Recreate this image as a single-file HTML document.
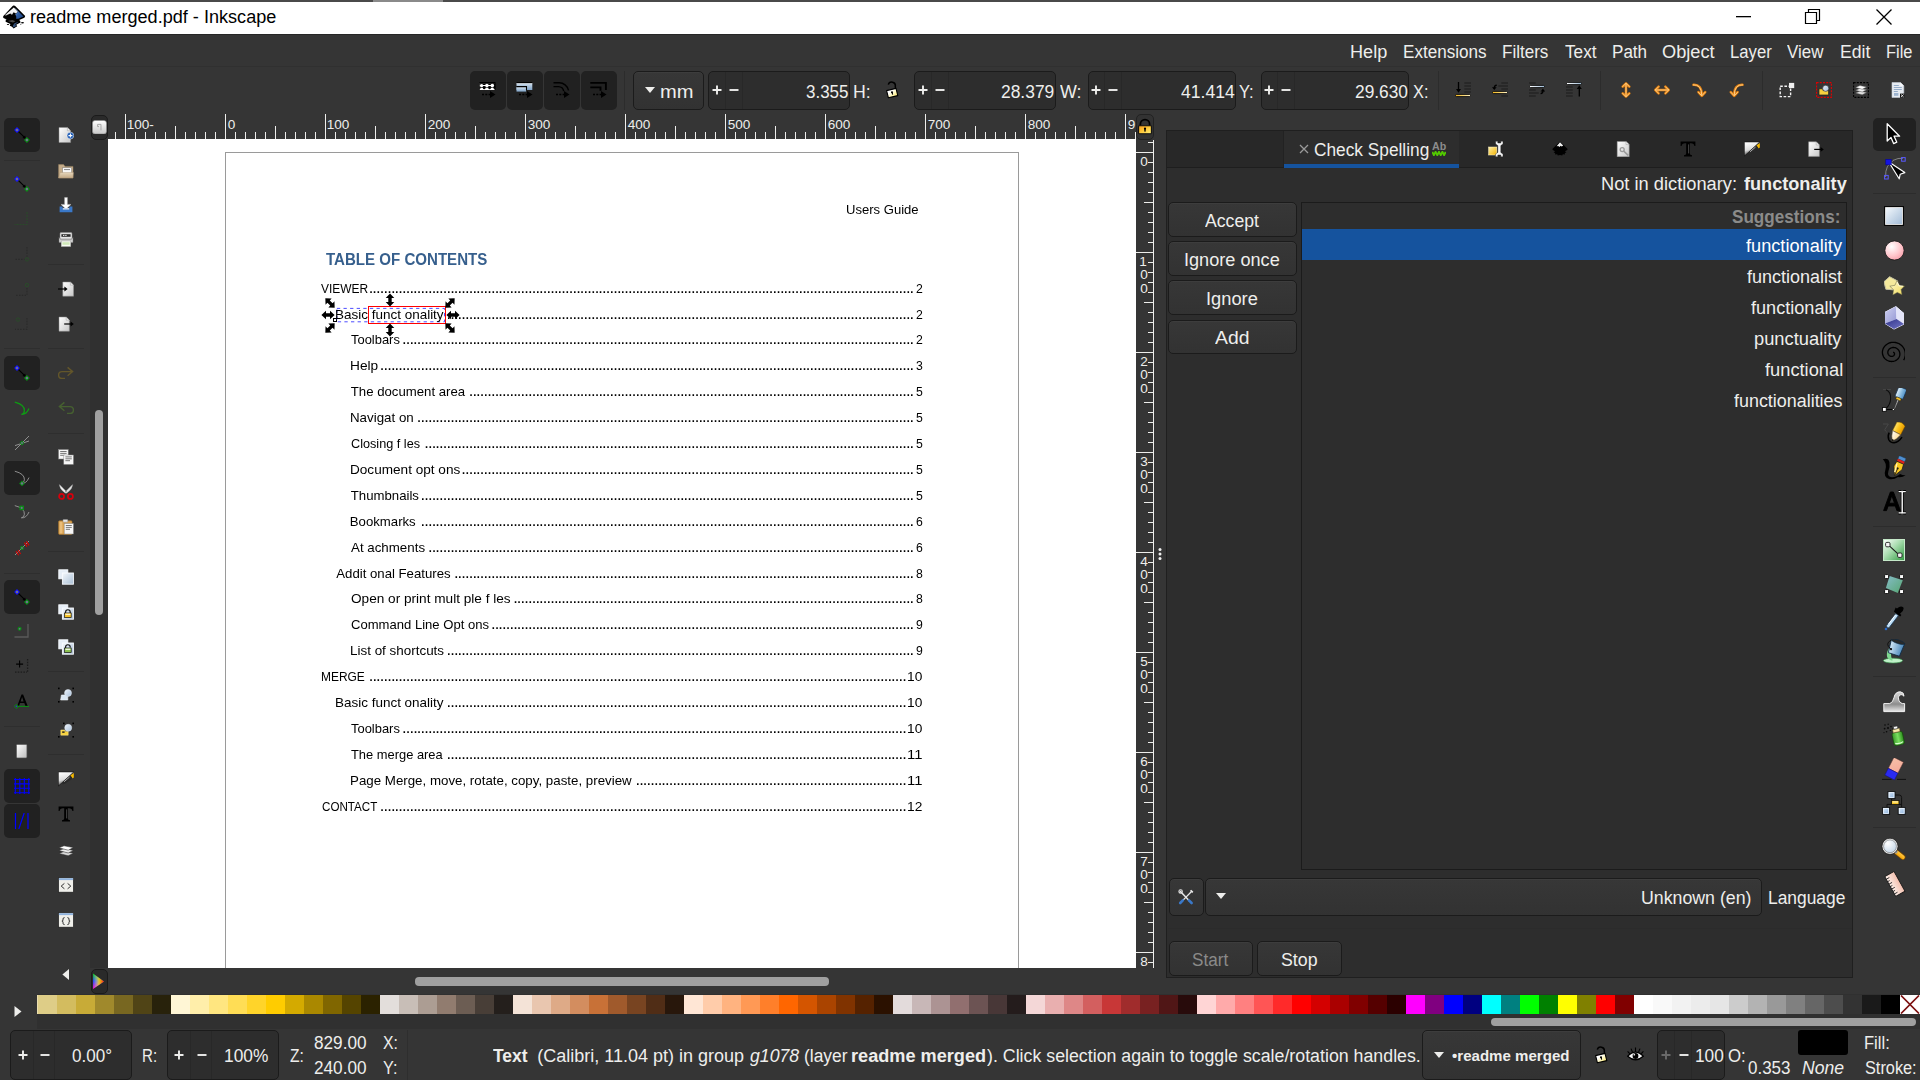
<!DOCTYPE html><html><head><meta charset="utf-8"><title>readme merged.pdf - Inkscape</title><style>

html,body{margin:0;padding:0;background:#353535;}
body{width:1920px;height:1080px;overflow:hidden;position:relative;font-family:"Liberation Sans",sans-serif;color:#eeeeec;}
#app div,#app svg,#app span{position:absolute;box-sizing:border-box;}
#app{position:absolute;left:0;top:0;width:1920px;height:1080px;overflow:hidden;}
#app span{white-space:pre;line-height:0;transform-origin:0 0;}
.btn{background:linear-gradient(#373737,#323232);border:1px solid #1b1b1b;border-radius:5px;box-shadow:inset 0 1px rgba(255,255,255,.03);}
.ent{background:#2d2d2d;border:1px solid #1b1b1b;border-radius:5px;}
.tog{background:#212121;border-radius:5px;}

</style></head><body><div id="app">
<div style="left:0px;top:0px;width:1920px;height:2px;background:#4a4a4a;"></div>
<div style="left:373px;top:0px;width:70px;height:2px;background:#8a8a8a;"></div>
<div style="left:0px;top:2px;width:1920px;height:32px;background:#ffffff;"></div>
<div style="left:0px;top:34px;width:1920px;height:32px;background:#353535;"></div>
<div style="left:0px;top:34px;width:1920px;height:1px;background:#262626;"></div>
<div style="left:0px;top:66px;width:1920px;height:1px;background:#303030;"></div>
<div class="tog" style="left:470px;top:71px;width:36px;height:39px;"></div>
<div class="tog" style="left:507px;top:71px;width:36px;height:39px;"></div>
<div class="tog" style="left:544px;top:71px;width:36px;height:39px;"></div>
<div class="tog" style="left:581px;top:71px;width:36px;height:39px;"></div>
<div style="left:624px;top:71px;width:1px;height:39px;background:#2c2c2c;"></div>
<div class="btn" style="left:632.5px;top:71px;width:71px;height:39px;"></div>
<div class="ent" style="left:708.25px;top:71px;width:141.25px;height:39px;"></div>
<div style="left:724.5px;top:72px;width:1px;height:37px;background:#282828;"></div>
<div style="left:741.5px;top:72px;width:1px;height:37px;background:#282828;"></div>
<div class="ent" style="left:914.25px;top:71px;width:141.5px;height:39px;"></div>
<div style="left:930.5px;top:72px;width:1px;height:37px;background:#282828;"></div>
<div style="left:947.5px;top:72px;width:1px;height:37px;background:#282828;"></div>
<div class="ent" style="left:1087.5px;top:71px;width:148.0px;height:39px;"></div>
<div style="left:1103.5px;top:72px;width:1px;height:37px;background:#282828;"></div>
<div style="left:1120.5px;top:72px;width:1px;height:37px;background:#282828;"></div>
<div class="ent" style="left:1260.5px;top:71px;width:148.25px;height:39px;"></div>
<div style="left:1276.5px;top:72px;width:1px;height:37px;background:#282828;"></div>
<div style="left:1293.5px;top:72px;width:1px;height:37px;background:#282828;"></div>
<div style="left:1437.5px;top:71px;width:1px;height:39px;background:#2c2c2c;"></div>
<div style="left:1599.5px;top:71px;width:1px;height:39px;background:#2c2c2c;"></div>
<div style="left:1762px;top:71px;width:1px;height:39px;background:#2c2c2c;"></div>
<div class="tog" style="left:4px;top:118px;width:36px;height:34px;"></div>
<div class="tog" style="left:4px;top:356px;width:36px;height:34px;"></div>
<div class="tog" style="left:4px;top:461px;width:36px;height:34px;"></div>
<div class="tog" style="left:4px;top:580px;width:36px;height:34px;"></div>
<div class="tog" style="left:4px;top:769px;width:36px;height:34px;"></div>
<div class="tog" style="left:4px;top:804px;width:36px;height:34px;"></div>
<div style="left:4px;top:159.5px;width:36px;height:1px;background:#2e2e2e;"></div>
<div style="left:4px;top:348px;width:36px;height:1px;background:#2e2e2e;"></div>
<div style="left:4px;top:572.5px;width:36px;height:1px;background:#2e2e2e;"></div>
<div style="left:4px;top:726px;width:36px;height:1px;background:#2e2e2e;"></div>
<div style="left:48px;top:264px;width:36px;height:1px;background:#2e2e2e;"></div>
<div style="left:48px;top:348px;width:36px;height:1px;background:#2e2e2e;"></div>
<div style="left:48px;top:432.5px;width:36px;height:1px;background:#2e2e2e;"></div>
<div style="left:48px;top:551px;width:36px;height:1px;background:#2e2e2e;"></div>
<div style="left:48px;top:670.5px;width:36px;height:1px;background:#2e2e2e;"></div>
<div style="left:48px;top:754px;width:36px;height:1px;background:#2e2e2e;"></div>
<div style="left:90px;top:140px;width:18px;height:828px;background:#303030;"></div>
<div style="left:95px;top:410px;width:8px;height:205px;background:#a0a0a0;border-radius:4px;"></div>
<div style="left:108px;top:113px;width:1028px;height:27px;background:#353535;"></div>
<div style="left:108px;top:139px;width:1028px;height:829px;background:#ffffff;"></div>
<div style="left:1136px;top:140px;width:18px;height:828px;background:#353535;"></div>
<div style="left:91px;top:114.5px;width:17px;height:25.5px;background:#2a2a2a;border:1px solid #1b1b1b;border-radius:5px;"></div>
<div style="left:1136px;top:114px;width:18px;height:26px;background:#323232;border:1px solid #222222;border-radius:5px;"></div>
<div style="left:225px;top:152px;width:794px;height:816px;border:1px solid #9a9a9a;border-bottom:none;"></div>
<div style="left:368px;top:306px;width:78px;height:18px;border:1px solid #ff0000;"></div>
<div style="left:333px;top:317.5px;width:4px;height:4px;background:#ffffff;border:1px solid #000000;"></div>
<div style="left:414.5px;top:977px;width:414px;height:8.5px;background:#a0a0a0;border-radius:4px;"></div>
<div style="left:90.5px;top:968.5px;width:17px;height:25px;background:#2a2a2a;border:1px solid #1b1b1b;border-radius:5px;"></div>
<div style="left:1166px;top:130px;width:687px;height:848px;background:#2d2d2d;border:1px solid #1f1f1f;"></div>
<div style="left:1167px;top:131px;width:685px;height:36px;background:#282828;"></div>
<div style="left:1167px;top:167px;width:685px;height:1px;background:#1e1e1e;"></div>
<div style="left:1283px;top:131px;width:1px;height:36px;background:#222222;"></div>
<div style="left:1284px;top:131px;width:175px;height:36px;background:#2d2d2d;"></div>
<div style="left:1284px;top:163.5px;width:175px;height:4px;background:#15539e;"></div>
<div class="btn" style="left:1168px;top:202.0px;width:129px;height:34.5px;"></div>
<div class="btn" style="left:1168px;top:241.2px;width:129px;height:34.5px;"></div>
<div class="btn" style="left:1168px;top:280.4px;width:129px;height:34.5px;"></div>
<div class="btn" style="left:1168px;top:319.6px;width:129px;height:34.5px;"></div>
<div style="left:1301px;top:202px;width:546px;height:668px;background:#2d2d2d;border:1px solid #1b1b1b;"></div>
<div style="left:1302px;top:229px;width:544px;height:31px;background:#15539e;"></div>
<div class="btn" style="left:1168.5px;top:877.5px;width:35px;height:38px;"></div>
<div class="btn" style="left:1205px;top:877.5px;width:556.5px;height:38px;"></div>
<div style="left:1168px;top:928px;width:684px;height:1px;background:#2b2b2b;"></div>
<div class="btn" style="left:1168.5px;top:941px;width:84px;height:34.5px;"></div>
<div class="btn" style="left:1257px;top:941px;width:84.5px;height:34.5px;"></div>
<div class="tog" style="left:1873px;top:118px;width:43px;height:33px;"></div>
<div style="left:1873px;top:192.5px;width:43px;height:1px;background:#2c2c2c;"></div>
<div style="left:1873px;top:376.5px;width:43px;height:1px;background:#2c2c2c;"></div>
<div style="left:1873px;top:526px;width:43px;height:1px;background:#2c2c2c;"></div>
<div style="left:1873px;top:676px;width:43px;height:1px;background:#2c2c2c;"></div>
<div style="left:1873px;top:826.5px;width:43px;height:1px;background:#2c2c2c;"></div>
<div style="left:0px;top:994px;width:1920px;height:35px;background:#303030;"></div>
<div style="left:0px;top:994px;width:37px;height:35px;background:#353535;"></div>
<div style="left:37px;top:995px;width:2px;height:19px;background:#e9ddaf;"></div>
<div style="left:38px;top:995px;width:1862px;height:19px;background:linear-gradient(90deg,#decd87 0px,#decd87 19px,#d3bc5f 19px,#d3bc5f 38px,#c8ab37 38px,#c8ab37 57px,#a0892c 57px,#a0892c 76px,#786721 76px,#786721 95px,#504416 95px,#504416 114px,#28220b 114px,#28220b 133px,#fff6d5 133px,#fff6d5 152px,#ffeeaa 152px,#ffeeaa 171px,#ffe680 171px,#ffe680 190px,#ffdd55 190px,#ffdd55 209px,#ffd42a 209px,#ffd42a 228px,#ffcc00 228px,#ffcc00 247px,#d4aa00 247px,#d4aa00 266px,#aa8800 266px,#aa8800 285px,#806600 285px,#806600 304px,#554400 304px,#554400 323px,#2b2200 323px,#2b2200 342px,#e3dedb 342px,#e3dedb 361px,#c8beb7 361px,#c8beb7 380px,#ac9d93 380px,#ac9d93 399px,#917c6f 399px,#917c6f 418px,#6c5d53 418px,#6c5d53 437px,#483e37 437px,#483e37 456px,#241f1c 456px,#241f1c 475px,#f4e3d7 475px,#f4e3d7 494px,#e9c6af 494px,#e9c6af 513px,#deaa87 513px,#deaa87 532px,#d38d5f 532px,#d38d5f 551px,#c87137 551px,#c87137 570px,#a05a2c 570px,#a05a2c 589px,#784421 589px,#784421 608px,#502d16 608px,#502d16 627px,#28170b 627px,#28170b 646px,#ffe6d5 646px,#ffe6d5 665px,#ffccaa 665px,#ffccaa 684px,#ffb380 684px,#ffb380 703px,#ff9955 703px,#ff9955 722px,#ff7f2a 722px,#ff7f2a 741px,#ff6600 741px,#ff6600 760px,#d45500 760px,#d45500 779px,#aa4400 779px,#aa4400 798px,#803300 798px,#803300 817px,#552200 817px,#552200 836px,#2b1100 836px,#2b1100 855px,#e3dbdb 855px,#e3dbdb 874px,#c8b7b7 874px,#c8b7b7 893px,#ac9393 893px,#ac9393 912px,#916f6f 912px,#916f6f 931px,#6c5353 931px,#6c5353 950px,#483737 950px,#483737 969px,#241c1c 969px,#241c1c 988px,#f4d7d7 988px,#f4d7d7 1007px,#e9afaf 1007px,#e9afaf 1026px,#de8787 1026px,#de8787 1045px,#d35f5f 1045px,#d35f5f 1064px,#c83737 1064px,#c83737 1083px,#a02c2c 1083px,#a02c2c 1102px,#782121 1102px,#782121 1121px,#501616 1121px,#501616 1140px,#280b0b 1140px,#280b0b 1159px,#ffd5d5 1159px,#ffd5d5 1178px,#ffaaaa 1178px,#ffaaaa 1197px,#ff8080 1197px,#ff8080 1216px,#ff5555 1216px,#ff5555 1235px,#ff2a2a 1235px,#ff2a2a 1254px,#ff0000 1254px,#ff0000 1273px,#d40000 1273px,#d40000 1292px,#aa0000 1292px,#aa0000 1311px,#800000 1311px,#800000 1330px,#550000 1330px,#550000 1349px,#2b0000 1349px,#2b0000 1368px,#ff00ff 1368px,#ff00ff 1387px,#800080 1387px,#800080 1406px,#0000ff 1406px,#0000ff 1425px,#000080 1425px,#000080 1444px,#00ffff 1444px,#00ffff 1463px,#008080 1463px,#008080 1482px,#00ff00 1482px,#00ff00 1501px,#008000 1501px,#008000 1520px,#ffff00 1520px,#ffff00 1539px,#808000 1539px,#808000 1558px,#ff0000 1558px,#ff0000 1577px,#800000 1577px,#800000 1596px,#ffffff 1596px,#ffffff 1615px,#f9f9f9 1615px,#f9f9f9 1634px,#f2f2f2 1634px,#f2f2f2 1653px,#ececec 1653px,#ececec 1672px,#e6e6e6 1672px,#e6e6e6 1691px,#cccccc 1691px,#cccccc 1710px,#b3b3b3 1710px,#b3b3b3 1729px,#999999 1729px,#999999 1748px,#808080 1748px,#808080 1767px,#666666 1767px,#666666 1786px,#4d4d4d 1786px,#4d4d4d 1805px,#333333 1805px,#333333 1824px,#1a1a1a 1824px,#1a1a1a 1843px,#000000 1843px,#000000 1862px);"></div>
<div style="left:1491px;top:1017.5px;width:425px;height:8.5px;background:#a0a0a0;border-radius:4px;"></div>
<div style="left:0px;top:1029px;width:1920px;height:51px;background:#353535;"></div>
<div class="ent" style="left:10px;top:1030px;width:122px;height:50px;"></div>
<div style="left:33.4px;top:1031px;width:1px;height:48px;background:#282828;"></div>
<div style="left:54.2px;top:1031px;width:1px;height:48px;background:#282828;"></div>
<div class="ent" style="left:167px;top:1030px;width:112px;height:50px;"></div>
<div style="left:190px;top:1031px;width:1px;height:48px;background:#282828;"></div>
<div style="left:211px;top:1031px;width:1px;height:48px;background:#282828;"></div>
<div style="left:407px;top:1030px;width:1px;height:50px;background:#2e2e2e;"></div>
<div class="btn" style="left:1421.5px;top:1030px;width:159.5px;height:50px;"></div>
<div class="ent" style="left:1657px;top:1030px;width:68px;height:50px;"></div>
<div style="left:1674px;top:1031px;width:1px;height:48px;background:#282828;"></div>
<div style="left:1691.3px;top:1031px;width:1px;height:48px;background:#282828;"></div>
<div style="left:1798.4px;top:1030.3px;width:49.6px;height:24.4px;background:#000000;border-radius:3px;"></div>
<svg style="left:1736.0px;top:15.0px" width="17" height="3" viewBox="0 0 17 3"><rect x="0" y="1" width="15" height="1.3" fill="#000"/></svg>
<svg style="left:1803.5px;top:7.5px" width="18" height="18" viewBox="0 0 18 18"><path d="M1.5 4.5h11v11h-11z M4.5 4.5v-3h11v11h-3" fill="none" stroke="#000" stroke-width="1.2"/></svg>
<svg style="left:1874.5px;top:7.5px" width="18" height="18" viewBox="0 0 18 18"><path d="M1.5 1.5l15 15M16.5 1.5l-15 15" fill="none" stroke="#000" stroke-width="1.3"/></svg>
<svg style="left:645.0px;top:87.0px" width="10" height="6" viewBox="0 0 10 6"><path d="M0 0h10l-5 6z" fill="#eeeeec"/></svg>
<svg style="left:712.175px;top:85.0px" width="10" height="10" viewBox="0 0 10 10"><path d="M5 0.5v9M0.5 5h9" stroke="#eeeeec" stroke-width="1.9" fill="none"/></svg>
<svg style="left:729.3px;top:85.0px" width="10" height="10" viewBox="0 0 10 10"><path d="M0.5 5h9" stroke="#eeeeec" stroke-width="1.9" fill="none"/></svg>
<svg style="left:918.175px;top:85.0px" width="10" height="10" viewBox="0 0 10 10"><path d="M5 0.5v9M0.5 5h9" stroke="#eeeeec" stroke-width="1.9" fill="none"/></svg>
<svg style="left:935.3px;top:85.0px" width="10" height="10" viewBox="0 0 10 10"><path d="M0.5 5h9" stroke="#eeeeec" stroke-width="1.9" fill="none"/></svg>
<svg style="left:1091.3px;top:85.0px" width="10" height="10" viewBox="0 0 10 10"><path d="M5 0.5v9M0.5 5h9" stroke="#eeeeec" stroke-width="1.9" fill="none"/></svg>
<svg style="left:1108.3px;top:85.0px" width="10" height="10" viewBox="0 0 10 10"><path d="M0.5 5h9" stroke="#eeeeec" stroke-width="1.9" fill="none"/></svg>
<svg style="left:1264.3px;top:85.0px" width="10" height="10" viewBox="0 0 10 10"><path d="M5 0.5v9M0.5 5h9" stroke="#eeeeec" stroke-width="1.9" fill="none"/></svg>
<svg style="left:1281.3px;top:85.0px" width="10" height="10" viewBox="0 0 10 10"><path d="M0.5 5h9" stroke="#eeeeec" stroke-width="1.9" fill="none"/></svg>
<svg style="left:108px;top:113px" width="1028" height="27"><path d="M7.5 19V26 M17.5 1V26 M27.5 19V26 M37.5 19V26 M47.5 19V26 M57.5 19V26 M67.5 13V26 M77.5 19V26 M87.5 19V26 M97.5 19V26 M107.5 19V26 M117.5 1V26 M127.5 19V26 M137.5 19V26 M147.5 19V26 M157.5 19V26 M167.5 13V26 M177.5 19V26 M187.5 19V26 M197.5 19V26 M207.5 19V26 M217.5 1V26 M227.5 19V26 M237.5 19V26 M247.5 19V26 M257.5 19V26 M267.5 13V26 M277.5 19V26 M287.5 19V26 M297.5 19V26 M307.5 19V26 M317.5 1V26 M327.5 19V26 M337.5 19V26 M347.5 19V26 M357.5 19V26 M367.5 13V26 M377.5 19V26 M387.5 19V26 M397.5 19V26 M407.5 19V26 M417.5 1V26 M427.5 19V26 M437.5 19V26 M447.5 19V26 M457.5 19V26 M467.5 13V26 M477.5 19V26 M487.5 19V26 M497.5 19V26 M507.5 19V26 M517.5 1V26 M527.5 19V26 M537.5 19V26 M547.5 19V26 M557.5 19V26 M567.5 13V26 M577.5 19V26 M587.5 19V26 M597.5 19V26 M607.5 19V26 M617.5 1V26 M627.5 19V26 M637.5 19V26 M647.5 19V26 M657.5 19V26 M667.5 13V26 M677.5 19V26 M687.5 19V26 M697.5 19V26 M707.5 19V26 M717.5 1V26 M727.5 19V26 M737.5 19V26 M747.5 19V26 M757.5 19V26 M767.5 13V26 M777.5 19V26 M787.5 19V26 M797.5 19V26 M807.5 19V26 M817.5 1V26 M827.5 19V26 M837.5 19V26 M847.5 19V26 M857.5 19V26 M867.5 13V26 M877.5 19V26 M887.5 19V26 M897.5 19V26 M907.5 19V26 M917.5 1V26 M927.5 19V26 M937.5 19V26 M947.5 19V26 M957.5 19V26 M967.5 13V26 M977.5 19V26 M987.5 19V26 M997.5 19V26 M1007.5 19V26 M1017.5 1V26 M1027.5 19V26" stroke="#eeeeec" stroke-width="1" fill="none"/></svg>
<svg style="left:1136px;top:140px" width="18" height="828"><path d="M12 2.5H17 M0 12.5H17 M12 22.5H17 M12 32.5H17 M12 42.5H17 M12 52.5H17 M8 62.5H17 M12 72.5H17 M12 82.5H17 M12 92.5H17 M12 102.5H17 M0 112.5H17 M12 122.5H17 M12 132.5H17 M12 142.5H17 M12 152.5H17 M8 162.5H17 M12 172.5H17 M12 182.5H17 M12 192.5H17 M12 202.5H17 M0 212.5H17 M12 222.5H17 M12 232.5H17 M12 242.5H17 M12 252.5H17 M8 262.5H17 M12 272.5H17 M12 282.5H17 M12 292.5H17 M12 302.5H17 M0 312.5H17 M12 322.5H17 M12 332.5H17 M12 342.5H17 M12 352.5H17 M8 362.5H17 M12 372.5H17 M12 382.5H17 M12 392.5H17 M12 402.5H17 M0 412.5H17 M12 422.5H17 M12 432.5H17 M12 442.5H17 M12 452.5H17 M8 462.5H17 M12 472.5H17 M12 482.5H17 M12 492.5H17 M12 502.5H17 M0 512.5H17 M12 522.5H17 M12 532.5H17 M12 542.5H17 M12 552.5H17 M8 562.5H17 M12 572.5H17 M12 582.5H17 M12 592.5H17 M12 602.5H17 M0 612.5H17 M12 622.5H17 M12 632.5H17 M12 642.5H17 M12 652.5H17 M8 662.5H17 M12 672.5H17 M12 682.5H17 M12 692.5H17 M12 702.5H17 M0 712.5H17 M12 722.5H17 M12 732.5H17 M12 742.5H17 M12 752.5H17 M8 762.5H17 M12 772.5H17 M12 782.5H17 M12 792.5H17 M12 802.5H17 M0 812.5H17 M12 822.5H17 M17.5 0V828" stroke="#eeeeec" stroke-width="1" fill="none"/></svg>
<svg style="left:335px;top:306px" width="112" height="18"><rect x="1.9" y="2.4" width="107.6" height="13.4" fill="none" stroke="#3a3aff" stroke-width="0.9" stroke-dasharray="3.3 3.3"/></svg>
<svg style="left:322.4px;top:294.5px" width="16" height="16" viewBox="-8 -8 16 16"><path d="M-6.6 0l4.6 -4.3v2.6h4v-2.6l4.6 4.3l-4.6 4.3v-2.6h-4v2.6z" fill="#000" transform="rotate(45)"/></svg>
<svg style="left:382.4px;top:292.2px" width="16" height="16" viewBox="-8 -8 16 16"><path d="M-6.6 0l4.6 -4.3v2.6h4v-2.6l4.6 4.3l-4.6 4.3v-2.6h-4v2.6z" fill="#000" transform="rotate(90)"/></svg>
<svg style="left:442.4px;top:294.5px" width="16" height="16" viewBox="-8 -8 16 16"><path d="M-6.6 0l4.6 -4.3v2.6h4v-2.6l4.6 4.3l-4.6 4.3v-2.6h-4v2.6z" fill="#000" transform="rotate(-45)"/></svg>
<svg style="left:320.3px;top:306.6px" width="16" height="16" viewBox="-8 -8 16 16"><path d="M-6.6 0l4.6 -4.3v2.6h4v-2.6l4.6 4.3l-4.6 4.3v-2.6h-4v2.6z" fill="#000" transform="rotate(0)"/></svg>
<svg style="left:444.7px;top:306.6px" width="16" height="16" viewBox="-8 -8 16 16"><path d="M-6.6 0l4.6 -4.3v2.6h4v-2.6l4.6 4.3l-4.6 4.3v-2.6h-4v2.6z" fill="#000" transform="rotate(0)"/></svg>
<svg style="left:322.4px;top:319.5px" width="16" height="16" viewBox="-8 -8 16 16"><path d="M-6.6 0l4.6 -4.3v2.6h4v-2.6l4.6 4.3l-4.6 4.3v-2.6h-4v2.6z" fill="#000" transform="rotate(-45)"/></svg>
<svg style="left:382.4px;top:321.8px" width="16" height="16" viewBox="-8 -8 16 16"><path d="M-6.6 0l4.6 -4.3v2.6h4v-2.6l4.6 4.3l-4.6 4.3v-2.6h-4v2.6z" fill="#000" transform="rotate(90)"/></svg>
<svg style="left:442.4px;top:319.5px" width="16" height="16" viewBox="-8 -8 16 16"><path d="M-6.6 0l4.6 -4.3v2.6h4v-2.6l4.6 4.3l-4.6 4.3v-2.6h-4v2.6z" fill="#000" transform="rotate(45)"/></svg>
<svg style="left:1299.0px;top:143.5px" width="10" height="10" viewBox="0 0 10 10"><path d="M1 1l8 8M9 1l-8 8" stroke="#9a9a9a" stroke-width="1.3" fill="none"/></svg>
<svg style="left:1216.3px;top:893.0px" width="10" height="6" viewBox="0 0 10 6"><path d="M0 0h10l-5 6z" fill="#eeeeec"/></svg>
<svg style="left:1157px;top:546px" width="6" height="16"><circle cx="3" cy="3.500" r="1.500" fill="#f0f0f0"/><circle cx="3" cy="8.100" r="1.500" fill="#f0f0f0"/><circle cx="3" cy="12.600" r="1.500" fill="#f0f0f0"/></svg>
<svg style="left:1900.0px;top:995.0px" width="20" height="19" viewBox="0 0 20 19"><rect width="20" height="19" fill="#fff"/><path d="M1 0.5l18 18M19 0.5l-18 18" stroke="#7c1010" stroke-width="1.700"/></svg>
<svg style="left:14.3px;top:1006.3px" width="8" height="11" viewBox="0 0 8 11"><path d="M0.5 0l7 5.5l-7 5.5z" fill="#eeeeec"/></svg>
<svg style="left:17.5px;top:1049.5px" width="10" height="10" viewBox="0 0 10 10"><path d="M5 0.5v9M0.5 5h9" stroke="#eeeeec" stroke-width="1.9" fill="none"/></svg>
<svg style="left:40.099999999999994px;top:1049.5px" width="10" height="10" viewBox="0 0 10 10"><path d="M0.5 5h9" stroke="#eeeeec" stroke-width="1.9" fill="none"/></svg>
<svg style="left:174.3px;top:1049.5px" width="10" height="10" viewBox="0 0 10 10"><path d="M5 0.5v9M0.5 5h9" stroke="#eeeeec" stroke-width="1.9" fill="none"/></svg>
<svg style="left:196.8px;top:1049.5px" width="10" height="10" viewBox="0 0 10 10"><path d="M0.5 5h9" stroke="#eeeeec" stroke-width="1.9" fill="none"/></svg>
<svg style="left:1433.7px;top:1051.7px" width="10" height="6" viewBox="0 0 10 6"><path d="M0 0h10l-5 6z" fill="#eeeeec"/></svg>
<svg style="left:1661.3px;top:1049.5px" width="10" height="10" viewBox="0 0 10 10"><path d="M5 0.5v9M0.5 5h9" stroke="#6a6a6a" stroke-width="1.9" fill="none"/></svg>
<svg style="left:1678.95px;top:1049.5px" width="10" height="10" viewBox="0 0 10 10"><path d="M0.5 5h9" stroke="#eeeeec" stroke-width="1.9" fill="none"/></svg>
<svg style="left:478.5px;top:82px" width="17" height="16" viewBox="0 0 17 16"><rect x="0.5" y="0" width="16" height="8" fill="#000"/><rect x="0.8" y="1.3" width="14.7" height="6.7" fill="#fff"/><rect x="0.8" y="1.2" width="15.4" height="4.600" fill="#000"/><circle cx="2.600" cy="3.600" r="1.700" fill="#fff"/><circle cx="7.900" cy="3.600" r="1.800" fill="#fff"/><circle cx="13.300" cy="3.600" r="1.800" fill="#fff"/><rect x="2" y="3" width="12" height="1.100" fill="#fff"/><circle cx="5.200" cy="5.900" r="1.300" fill="#000"/><circle cx="10.600" cy="5.900" r="1.300" fill="#000"/><circle cx="15.400" cy="6" r="0.900" fill="#000"/><circle cx="0.900" cy="6" r="0.700" fill="#000"/><path d="M3 12.5h8" stroke="#000" stroke-width="1.3" stroke-dasharray="2 1.3" fill="none"/><path d="M11 9l5.5 3.5l-5.5 3.5z" fill="#000"/></svg>
<svg style="left:515.5px;top:82px" width="17" height="16" viewBox="0 0 17 16"><defs><linearGradient id="g1" x1="0" y1="0" x2="0" y2="1"><stop offset="0" stop-color="#d5e3f0"/><stop offset="1" stop-color="#7ea2c6"/></linearGradient></defs><rect x="0.500" y="0.600" width="15.800" height="7.400" fill="url(#g1)"/><rect x="0.500" y="5" width="9.600" height="4.600" fill="url(#g1)"/><path d="M0.300 4.600h10.200v3.600" stroke="#000" stroke-width="1.100" fill="none"/><rect x="0.300" y="0" width="16.200" height="1.300" fill="#000"/><rect x="0.500" y="1.300" width="15.800" height="0.800" fill="#fff" opacity="0.600"/><path d="M3 12.5h8" stroke="#000" stroke-width="1.3" stroke-dasharray="2 1.3" fill="none"/><path d="M11 9l5.5 3.5l-5.5 3.5z" fill="#000"/></svg>
<svg style="left:552.5px;top:82px" width="17" height="16" viewBox="0 0 17 16"><path d="M0.5 0.8h5.5a9.5 9.5 0 0 1 9.5 7.5M0.5 4.6h5a5.5 5.5 0 0 1 5.2 4.5" stroke="#000" stroke-width="1.4" fill="none"/><path d="M3 12.5h8" stroke="#000" stroke-width="1.3" stroke-dasharray="2 1.3" fill="none"/><path d="M11 9l5.5 3.5l-5.5 3.5z" fill="#000"/></svg>
<svg style="left:589.5px;top:82px" width="17" height="16" viewBox="0 0 17 16"><path d="M0.3 0.9h15.6v7M0.3 5.4h10.2v3.4" stroke="#000" stroke-width="1.9" fill="none"/><path d="M3 12.5h8" stroke="#000" stroke-width="1.3" stroke-dasharray="2 1.3" fill="none"/><path d="M11 9l5.5 3.5l-5.5 3.5z" fill="#000"/></svg>
<svg style="left:884.3px;top:81px" width="16" height="18" viewBox="0 0 16 18"><defs><linearGradient id="g2" x1="0" y1="0" x2="1" y2="1"><stop offset="0" stop-color="#ffffff"/><stop offset="0.35" stop-color="#ffffff"/><stop offset="0.7" stop-color="#fff3a0"/><stop offset="1" stop-color="#ecc830"/></linearGradient></defs><path d="M4.3 3.6a3.6 3.6 0 0 1 7 1.6l0.3 3" stroke="#000" stroke-width="1.5" fill="none"/><path d="M2.6 9.6l9.4 -2.2l1.8 7.2l-9.4 2.2z" fill="url(#g2)" stroke="#000" stroke-width="1.1" stroke-linejoin="round"/><circle cx="8" cy="11.2" r="1.05" fill="#000"/><path d="M7.6 11.5l0.5 2.3l1.1 -0.3l-0.5 -2.2z" fill="#000"/></svg>
<svg style="left:1137px;top:118px" width="16" height="17" viewBox="0 0 16 17"><defs><linearGradient id="g3" x1="0" y1="0" x2="1" y2="1"><stop offset="0" stop-color="#f79a1c"/><stop offset="0.5" stop-color="#ffc93a"/><stop offset="1" stop-color="#fff27a"/></linearGradient></defs><path d="M3.4 8.2v-2a4.6 4.6 0 0 1 9.2 0v2" stroke="#000" stroke-width="1.7" fill="none"/><rect x="1.6" y="7.8" width="12.8" height="8" rx="0.8" fill="url(#g3)" stroke="#111" stroke-width="1.1"/><circle cx="8" cy="10.6" r="1.1" fill="#000"/><rect x="7.3" y="11" width="1.4" height="2.6" fill="#000"/></svg>
<svg style="left:1455px;top:81.5px" width="16" height="16" viewBox="0 0 16 16"><defs><linearGradient id="g4" x1="0" y1="0" x2="1" y2="0"><stop offset="0" stop-color="#f2b619"/><stop offset="1" stop-color="#fff3c8"/></linearGradient></defs><rect x="9.3" y="0.2" width="6.699999999999999" height="1.6" fill="#262626"/><rect x="9.3" y="3.2" width="6.699999999999999" height="1.6" fill="#262626"/><rect x="9.3" y="6.2" width="6.699999999999999" height="1.6" fill="#262626"/><rect x="9.3" y="9.2" width="6.699999999999999" height="1.6" fill="#262626"/><path d="M3.5 0v8" stroke="#000" stroke-width="1.3"/><path d="M1 7h5l-2.5 3.7z" fill="#000"/><rect x="0.5" y="12.4" width="15" height="2.2" rx="1.1" fill="url(#g4)" stroke="#0d0d0d" stroke-width="0.9"/></svg>
<svg style="left:1492px;top:81.5px" width="16" height="16" viewBox="0 0 16 16"><defs><linearGradient id="g4" x1="0" y1="0" x2="1" y2="0"><stop offset="0" stop-color="#f2b619"/><stop offset="1" stop-color="#fff3c8"/></linearGradient></defs><rect x="9.3" y="0.2" width="6.699999999999999" height="1.6" fill="#262626"/><rect x="9.3" y="6.2" width="6.699999999999999" height="1.6" fill="#262626"/><rect x="9.3" y="13.2" width="6.699999999999999" height="1.6" fill="#262626"/><rect x="6.3" y="3.2" width="9.7" height="1.6" fill="#262626"/><path d="M4.8 3.2q-2.6 0.3 -2.6 3" stroke="#000" stroke-width="1.3" fill="none"/><path d="M0 5.2h4.6l-2.3 2.8z" fill="#000"/><rect x="0.5" y="9.4" width="15" height="2.2" rx="1.1" fill="url(#g4)" stroke="#0d0d0d" stroke-width="0.9"/></svg>
<svg style="left:1529px;top:81.5px" width="16" height="16" viewBox="0 0 16 16"><defs><linearGradient id="g5" x1="0" y1="0" x2="1" y2="0"><stop offset="0" stop-color="#ffffff"/><stop offset="1" stop-color="#9fbbd6"/></linearGradient></defs><rect x="0" y="0.2" width="6.8" height="1.6" fill="#262626"/><rect x="0" y="7.2" width="6.8" height="1.6" fill="#262626"/><rect x="0" y="13.2" width="6.8" height="1.6" fill="#262626"/><rect x="0" y="10.2" width="9.8" height="1.6" fill="#262626"/><path d="M11.6 11.6q2.4 -0.3 2.4 -2.6" stroke="#000" stroke-width="1.3" fill="none"/><path d="M11.6 9.4h4.6l-2.3 -2.7z" fill="#000"/><rect x="0.5" y="3.4" width="15" height="2.2" rx="1.1" fill="url(#g5)" stroke="#0d0d0d" stroke-width="0.9"/></svg>
<svg style="left:1566px;top:81.5px" width="16" height="16" viewBox="0 0 16 16"><defs><linearGradient id="g5" x1="0" y1="0" x2="1" y2="0"><stop offset="0" stop-color="#ffffff"/><stop offset="1" stop-color="#9fbbd6"/></linearGradient></defs><rect x="0" y="4.2" width="6.8" height="1.6" fill="#262626"/><rect x="0" y="7.2" width="6.8" height="1.6" fill="#262626"/><rect x="0" y="10.2" width="6.8" height="1.6" fill="#262626"/><rect x="0" y="13.2" width="6.8" height="1.6" fill="#262626"/><path d="M13.3 14.6v-9" stroke="#000" stroke-width="1.3"/><path d="M10.8 7h5l-2.5 -3.7z" fill="#000"/><rect x="0.5" y="0.4" width="15" height="2.2" rx="1.1" fill="url(#g5)" stroke="#0d0d0d" stroke-width="0.9"/></svg>
<svg style="left:1616.6px;top:81px" width="18" height="18" viewBox="0 0 18 18"><path d="M9 2.4v13.2M5.7 5.6l3.3 -3.3l3.3 3.3M5.7 12.4l3.3 3.3l3.3 -3.3" stroke="#e5800e" stroke-width="2.5" fill="none" stroke-linecap="round" stroke-linejoin="round"/><path d="M9 2.4v13.2M5.7 5.6l3.3 -3.3l3.3 3.3M5.7 12.4l3.3 3.3l3.3 -3.3" stroke="#ffd591" stroke-width="0.9" fill="none" stroke-linecap="round" stroke-linejoin="round"/></svg>
<svg style="left:1653.1px;top:80.5px" width="18" height="18" viewBox="0 0 18 18"><path d="M2.3 9h13.4M5.6 5.7l-3.3 3.3l3.3 3.3M12.4 5.7l3.3 3.3l-3.3 3.3" stroke="#e5800e" stroke-width="2.5" fill="none" stroke-linecap="round" stroke-linejoin="round"/><path d="M2.3 9h13.4M5.6 5.7l-3.3 3.3l3.3 3.3M12.4 5.7l3.3 3.3l-3.3 3.3" stroke="#ffd591" stroke-width="0.9" fill="none" stroke-linecap="round" stroke-linejoin="round"/></svg>
<svg style="left:1690.5px;top:81.4px" width="18" height="18" viewBox="0 0 18 18"><path d="M2.4 3.8q8.200 -0.600 8.400 10.200M7.400 11.200l3.400 3.600l3.400 -3.600" stroke="#e5800e" stroke-width="2.5" fill="none" stroke-linecap="round" stroke-linejoin="round"/><path d="M2.4 3.8q8.200 -0.600 8.400 10.200M7.400 11.200l3.400 3.600l3.400 -3.600" stroke="#ffd591" stroke-width="0.9" fill="none" stroke-linecap="round" stroke-linejoin="round"/></svg>
<svg style="left:1727.3px;top:81.4px" width="18" height="18" viewBox="0 0 18 18"><path d="M15.600 3.800q-8.200 -0.600 -8.400 10.200M3.800 11.200l3.400 3.600l3.400 -3.600" stroke="#e5800e" stroke-width="2.5" fill="none" stroke-linecap="round" stroke-linejoin="round"/><path d="M15.600 3.800q-8.200 -0.600 -8.400 10.200M3.800 11.200l3.400 3.600l3.400 -3.600" stroke="#ffd591" stroke-width="0.9" fill="none" stroke-linecap="round" stroke-linejoin="round"/></svg>
<svg style="left:1779px;top:82px" width="16" height="16" viewBox="0 0 16 16"><rect x="1.2" y="4.2" width="10.4" height="10.4" fill="none" stroke="#f4f4f4" stroke-width="1.4" stroke-dasharray="2.6 1.6"/><rect x="10" y="0.9" width="5.2" height="5.2" fill="#f0f0f0"/></svg>
<svg style="left:1816px;top:82px" width="16" height="16" viewBox="0 0 16 16"><defs><linearGradient id="g6" x1="0" y1="0" x2="1" y2="1"><stop offset="0" stop-color="#e7f0fa"/><stop offset="1" stop-color="#a7c0da"/></linearGradient></defs><rect x="0.6" y="0.6" width="14.8" height="14.8" fill="none" stroke="#e00000" stroke-width="1.1" stroke-dasharray="2 1.2"/><path d="M3 6.8h4v1.6h5.6v4.6h-9.6z" fill="#f7d23e" stroke="#1a1a1a" stroke-width="0.7"/><circle cx="9.7" cy="6.3" r="3.1" fill="url(#g6)" stroke="#2a2a2a" stroke-width="0.6"/></svg>
<svg style="left:1853px;top:82px" width="16" height="16" viewBox="0 0 16 16"><rect x="0.6" y="0.6" width="14.8" height="14.8" fill="none" stroke="#000" stroke-width="1.1" stroke-dasharray="2 1.2"/><path d="M2.6 11l4.4 -1.8l6.6 1.4l-4.4 2.2z" fill="#e0e0e0" stroke="#555" stroke-width="0.4"/><path d="M2.6 8.2l4.4 -1.8l6.6 1.4l-4.4 2.2z" fill="#f0f0f0" stroke="#555" stroke-width="0.4"/><path d="M2.6 5.4l4.4 -1.8l6.6 1.4l-4.4 2.2z" fill="#ffffff" stroke="#555" stroke-width="0.4"/></svg>
<svg style="left:1890.2px;top:82px" width="16" height="16" viewBox="0 0 16 16"><path d="M2 0.4h8.4l3.4 3.4v11.8h-11.8z" fill="#e6ebf1" stroke="#c8d0da" stroke-width="0.6"/><path d="M10.4 0.4v3.4h3.4z" fill="#fafcff"/><path d="M3.8 3.5h5M3.8 5.5h8M3.8 7.5h8M3.8 9.5h4" stroke="#8aa5c4" stroke-width="0.9"/><rect x="4" y="11" width="4.4" height="2.8" fill="#9db4cf"/><rect x="10" y="11.6" width="4.6" height="4.2" fill="#111"/><path d="M11 12.5l2.6 2.4M13.6 12.5l-2.6 2.4" stroke="#fff" stroke-width="0.8"/></svg>
<svg style="left:91.8px;top:119.6px" width="15" height="14.4" viewBox="0 0 15 14.4"><defs><linearGradient id="g7" x1="0" y1="0" x2="0" y2="1"><stop offset="0" stop-color="#ffffff"/><stop offset="1" stop-color="#c9c9c9"/></linearGradient></defs><rect x="0.5" y="0.5" width="14" height="13.4" rx="2.5" fill="url(#g7)" stroke="#8a8a8a" stroke-width="0.6"/><path d="M5.6 4.4h3.4v6M5.6 4.400v2.200h1.400" stroke="#a0a0a0" stroke-width="0.900" fill="none"/></svg>
<svg style="left:92.3px;top:972.7px" width="13" height="16" viewBox="0 0 13 16"><defs><linearGradient id="cm1" x1="0" y1="0" x2="0" y2="1"><stop offset="0" stop-color="#00d000"/><stop offset="0.5" stop-color="#2040ff"/><stop offset="1" stop-color="#ff00c0"/></linearGradient><linearGradient id="cm2" x1="0" y1="0" x2="1" y2="0"><stop offset="0" stop-color="#fff" stop-opacity="0"/><stop offset="0.55" stop-color="#ffe000" stop-opacity=".85"/><stop offset="1" stop-color="#ff2000"/></linearGradient></defs><path d="M1 0.5l11 8l-11 7.5z" fill="url(#cm1)"/><path d="M1 0.5l11 8l-11 7.5z" fill="url(#cm2)"/></svg>
<svg style="left:14px;top:127.2px" width="16" height="16" viewBox="0 0 16 16"><path d="M4.6 4.6l5.6 5.6" stroke="#000" stroke-width="1.2"/><path d="M12 12l-3.6 -0.9l2.7 -2.7z" fill="#000"/><path d="M3 0.10000000000000009L5.9 3L3 5.9L0.10000000000000009 3z" fill="#1414ff"/><circle cx="3" cy="3" r="1.22" fill="#6f6f8f"/><path d="M12.9 10.1L15.8 13L12.9 15.9L10.0 13z" fill="#0a8a14"/><circle cx="12.9" cy="13" r="1.22" fill="#6f6f8f"/></svg>
<svg style="left:14px;top:176.2px" width="16" height="16" viewBox="0 0 16 16"><path d="M4.6 4.6l5.6 5.6" stroke="#000" stroke-width="1.2"/><path d="M12 12l-3.6 -0.9l2.7 -2.7z" fill="#000"/><path d="M3 0.10000000000000009L5.9 3L3 5.9L0.10000000000000009 3z" fill="#1414ff"/><circle cx="3" cy="3" r="1.22" fill="#6f6f8f"/><path d="M12.9 10.1L15.8 13L12.9 15.9L10.0 13z" fill="#0a8a14"/><circle cx="12.9" cy="13" r="1.22" fill="#6f6f8f"/></svg>
<svg style="left:14px;top:365.2px" width="16" height="16" viewBox="0 0 16 16"><path d="M4.6 4.6l5.6 5.6" stroke="#000" stroke-width="1.2"/><path d="M12 12l-3.6 -0.9l2.7 -2.7z" fill="#000"/><path d="M3 0.10000000000000009L5.9 3L3 5.9L0.10000000000000009 3z" fill="#1414ff"/><circle cx="3" cy="3" r="1.22" fill="#6f6f8f"/><path d="M12.9 10.1L15.8 13L12.9 15.9L10.0 13z" fill="#0a8a14"/><circle cx="12.9" cy="13" r="1.22" fill="#6f6f8f"/></svg>
<svg style="left:14px;top:589.2px" width="16" height="16" viewBox="0 0 16 16"><path d="M4.6 4.6l5.6 5.6" stroke="#000" stroke-width="1.2"/><path d="M12 12l-3.6 -0.9l2.7 -2.7z" fill="#000"/><path d="M3 0.10000000000000009L5.9 3L3 5.9L0.10000000000000009 3z" fill="#1414ff"/><circle cx="3" cy="3" r="1.22" fill="#6f6f8f"/><path d="M12.9 10.1L15.8 13L12.9 15.9L10.0 13z" fill="#0a8a14"/><circle cx="12.9" cy="13" r="1.22" fill="#6f6f8f"/></svg>
<svg style="left:14px;top:211px" width="16" height="16" viewBox="0 0 16 16"><path d="M13 1v12.5h-12.5" stroke="#2a4a2a" stroke-width="1.1" stroke-dasharray="2 1" fill="none"/></svg>
<svg style="left:14px;top:246px" width="16" height="16" viewBox="0 0 16 16"><path d="M13 1v10M1.5 13.4h9" stroke="#2a2a2a" stroke-width="1.1" stroke-dasharray="1.4 1.4" fill="none"/><circle cx="13" cy="13.4" r="1.7" fill="none" stroke="#2a4a2a" stroke-width="1"/></svg>
<svg style="left:14px;top:282px" width="16" height="16" viewBox="0 0 16 16"><path d="M13 6v7.4h-12" stroke="#2a2a2a" stroke-width="1.1" stroke-dasharray="1.4 1.4" fill="none"/><circle cx="13" cy="3" r="1.7" fill="none" stroke="#2a4a2a" stroke-width="1"/></svg>
<svg style="left:14px;top:316px" width="16" height="16" viewBox="0 0 16 16"><path d="M13 2v11.4h-12" stroke="#2a2a2a" stroke-width="1.1" stroke-dasharray="1.4 1.4" fill="none"/><circle cx="4" cy="3.6" r="1.7" fill="none" stroke="#2a4a2a" stroke-width="1"/></svg>
<svg style="left:14px;top:400.5px" width="16" height="16" viewBox="0 0 16 16"><path d="M0.8 1.2q10 2.6 9.6 8.6q-0.3 3.4 -3 3.6q4.8 0.6 7.6 -5.8" stroke="#0f9a14" stroke-width="1.3" fill="none"/></svg>
<svg style="left:14px;top:435px" width="16" height="16" viewBox="0 0 16 16"><path d="M1 15l14 -14M1 10.6l14 -4.6" stroke="#9a9a9a" stroke-width="0.9" fill="none"/><path d="M8 5.6L10.4 8L8 10.4L5.6 8z" fill="#0a8a14"/><circle cx="8" cy="8" r="1.01" fill="#6f6f8f"/></svg>
<svg style="left:14px;top:469.5px" width="16" height="17" viewBox="0 0 16 17"><path d="M0.8 1.2q10 2.6 9.6 8.6q-0.3 3.4 -3 3.6q4.8 0.6 7.6 -5.8" stroke="#9a9a9a" stroke-width="0.9" fill="none"/><path d="M8 10.5L10.9 13.4L8 16.3L5.1 13.4z" fill="#0a8a14"/><circle cx="8" cy="13.4" r="1.22" fill="#6f6f8f"/></svg>
<svg style="left:14px;top:504px" width="16" height="16" viewBox="0 0 16 16"><path d="M0.8 1.6q10 2.6 9.6 8.6q-0.3 3.4 -3 3.6q4.8 0.6 7.6 -5.8" stroke="#9a9a9a" stroke-width="0.9" fill="none"/><rect x="5.4" y="1.6" width="4.6" height="4.6" fill="#0a8a14"/><circle cx="7.7" cy="3.9" r="1.1" fill="#6f6f8f"/></svg>
<svg style="left:14px;top:539.5px" width="16" height="16" viewBox="0 0 16 16"><path d="M1 15l14 -14" stroke="#9a9a9a" stroke-width="0.9"/><path d="M2 11.2l2.6 4M4 10l2.6 4M10.4 2.6l2.6 4M12.4 1.4l2.6 4" stroke="#e00000" stroke-width="1.1"/><circle cx="8" cy="8" r="2" fill="#0a8a14"/><circle cx="8" cy="8" r="0.9" fill="#6f6f8f"/></svg>
<svg style="left:14px;top:623px" width="16" height="16" viewBox="0 0 16 16"><path d="M14 1v13h-13.5" stroke="#5a5a5a" stroke-width="1.3" fill="none"/><circle cx="5.6" cy="5.8" r="2" fill="#0a8a14"/><circle cx="5.6" cy="5.8" r="0.9" fill="#6f6f8f"/></svg>
<svg style="left:14px;top:657.5px" width="16" height="16" viewBox="0 0 16 16"><path d="M13.6 1v13M1 14.2h12" stroke="#1c1c1c" stroke-width="1.3" stroke-dasharray="1.5 1.3" fill="none"/><path d="M5.6 2.6v7M2.1 6.1h7" stroke="#000" stroke-width="1.1"/></svg>
<svg style="left:14px;top:693px" width="16" height="17" viewBox="0 0 16 17"><path d="M3.2 13l4.3 -11.5h1.6l4.6 11.5h-2.3l-1.1 -3h-4.3l-1 3zM6.6 8.4h3l-1.5 -4.4z" fill="#000"/><path d="M3 13.4h12" stroke="#0a8a14" stroke-width="1.1"/><path d="M2.4 11.2l2.2 2.2l-2.2 2.2l-2.2 -2.2z" fill="none" stroke="#0a8a14" stroke-width="1"/><circle cx="2.4" cy="13.4" r="0.8" fill="#33c"/></svg>
<svg style="left:16.25px;top:744.25px" width="11.5" height="14.5" viewBox="0 0 11.5 14.5"><defs><linearGradient id="g8" x1="0" y1="0" x2="1" y2="1"><stop offset="0" stop-color="#ffffff"/><stop offset="1" stop-color="#bdbdbd"/></linearGradient></defs><rect x="0.5" y="0.5" width="10.4" height="13.4" rx="0.8" fill="url(#g8)" stroke="#555" stroke-width="0.6"/></svg>
<svg style="left:14px;top:778px" width="16" height="16" viewBox="0 0 16 16"><path d="M1.3 0v16M5.800 0v16M10.300 0v16M14.800 0v16M0 1.500h16M0 5.900h16M0 10.300h16M0 14.700h16" stroke="#0000ff" stroke-width="1.100"/></svg>
<svg style="left:14px;top:813px" width="16" height="16" viewBox="0 0 16 16"><path d="M1.5 0v16M14 0v16M10.2 0l-5.4 16" stroke="#0000ff" stroke-width="1.2"/></svg>
<svg style="left:58px;top:127px" width="16" height="16" viewBox="0 0 16 16"><defs><linearGradient id="g9" x1="0" y1="0" x2="1" y2="1"><stop offset="0" stop-color="#ffffff"/><stop offset="1" stop-color="#c8c8c8"/></linearGradient></defs><path d="M1 0.5h8.399999999999999l3.2 3.2v11.8h-11.6z" fill="url(#g9)" stroke="#8c8c8c" stroke-width="0.5"/><path d="M9.399999999999999 0.5v3.2h3.2z" fill="#f2f2f2" stroke="#8c8c8c" stroke-width="0.4"/><circle cx="12.4" cy="8.6" r="3.4" fill="#1d5ab4" stroke="#fff" stroke-width="0.5"/><path d="M12.4 6.6v4M10.4 8.6h4" stroke="#fff" stroke-width="1.1"/></svg>
<svg style="left:58px;top:162.5px" width="16" height="16" viewBox="0 0 16 16"><defs><linearGradient id="g10" x1="0" y1="0" x2="0" y2="1"><stop offset="0" stop-color="#e6d6ba"/><stop offset="1" stop-color="#c3a985"/></linearGradient></defs><path d="M0.6 1.6h5l1.4 1.8h8v11.6h-14.4z" fill="#c6ad8a" stroke="#9c8462" stroke-width="0.5"/><rect x="4.6" y="4.8" width="9" height="5.4" fill="#fbfbfb" stroke="#7a7a7a" stroke-width="0.5"/><path d="M6 6.6h6" stroke="#666" stroke-width="0.8"/><path d="M0.6 15l1.6 -5.6h13.2l-0.4 5.6z" fill="url(#g10)" stroke="#a89070" stroke-width="0.4"/></svg>
<svg style="left:58px;top:197px" width="16" height="16" viewBox="0 0 16 16"><path d="M6.6 0.4h2.8v7h3.6l-5 4.8l-5 -4.8h3.6z" fill="#ffffff" stroke="#bbb" stroke-width="0.4"/><path d="M1.6 9.6h3l0 1.6h6.8v-1.6h3v5.6h-12.8z" fill="#3a78c8"/><rect x="4.8" y="11.2" width="6.4" height="1.3" fill="#e8eef6"/></svg>
<svg style="left:58px;top:232px" width="16" height="15" viewBox="0 0 16 15"><rect x="2" y="0.6" width="12" height="6.6" rx="1" fill="#e4e4e4" stroke="#8a8a8a" stroke-width="0.5"/><rect x="3.4" y="2.2" width="9.2" height="2.6" fill="#2a2a2a"/><rect x="5" y="2.9" width="1.4" height="1.1" fill="#ddd"/><rect x="7.2" y="2.9" width="1.4" height="1.1" fill="#ddd"/><path d="M1 5.4l1.4 1.8h11.2l1.4 -1.8v5h-14z" fill="#cfcfcf" stroke="#777" stroke-width="0.4"/><rect x="3.2" y="9" width="9.6" height="5.6" fill="#f7fbf2" stroke="#999" stroke-width="0.4"/><rect x="4.4" y="10.2" width="7.2" height="2.6" fill="#cfe8b8"/></svg>
<svg style="left:58px;top:281px" width="16" height="16" viewBox="0 0 16 16"><defs><linearGradient id="g9" x1="0" y1="0" x2="1" y2="1"><stop offset="0" stop-color="#ffffff"/><stop offset="1" stop-color="#c8c8c8"/></linearGradient></defs><path d="M4.8 1h7.6000000000000005l3.2 3.2v11.0h-10.8z" fill="url(#g9)" stroke="#8c8c8c" stroke-width="0.5"/><path d="M12.400000000000002 1v3.2h3.2z" fill="#f2f2f2" stroke="#8c8c8c" stroke-width="0.4"/><path d="M0 8h7" stroke="#000" stroke-width="1.2"/><path d="M6.4 5.6l3.2 2.4l-3.2 2.4z" fill="#000"/></svg>
<svg style="left:58px;top:316px" width="16" height="16" viewBox="0 0 16 16"><defs><linearGradient id="g9" x1="0" y1="0" x2="1" y2="1"><stop offset="0" stop-color="#ffffff"/><stop offset="1" stop-color="#c8c8c8"/></linearGradient></defs><path d="M1 1h7.2l3.2 3.2v11.0h-10.4z" fill="url(#g9)" stroke="#8c8c8c" stroke-width="0.5"/><path d="M8.2 1v3.2h3.2z" fill="#f2f2f2" stroke="#8c8c8c" stroke-width="0.4"/><path d="M6.2 8h7" stroke="#000" stroke-width="1.2"/><path d="M12.6 5.6l3.2 2.4l-3.2 2.4z" fill="#000"/></svg>
<svg style="left:58px;top:366px" width="16" height="14" viewBox="0 0 16 14"><path d="M9.6 1.4l5 4.2l-5 4.2M14.2 5.6h-10.2a3.4 3.4 0 0 0 0 6.8h3" stroke="#63562a" stroke-width="1.400" fill="none"/></svg>
<svg style="left:58px;top:401px" width="16" height="14" viewBox="0 0 16 14"><path d="M6.4 1.4l-5 4.2l5 4.2M1.8 5.6h10.2a3.4 3.4 0 0 1 0 6.8h-3" stroke="#466030" stroke-width="1.400" fill="none"/></svg>
<svg style="left:58px;top:448.5px" width="16" height="16" viewBox="0 0 16 16"><rect x="0.6" y="0.6" width="9.6" height="9.4" fill="#f6f6f6" stroke="#8a8a8a" stroke-width="0.5"/><path d="M2.2 2.5h6.3999999999999995" stroke="#555" stroke-width="0.8"/><path d="M2.2 4.4h6.3999999999999995" stroke="#555" stroke-width="0.8"/><path d="M2.2 6.3h4.6" stroke="#555" stroke-width="0.8"/><rect x="5.8" y="6" width="9.6" height="9.4" fill="#f6f6f6" stroke="#8a8a8a" stroke-width="0.5"/><path d="M7.4 7.9h6.3999999999999995" stroke="#555" stroke-width="0.8"/><path d="M7.4 9.8h6.3999999999999995" stroke="#555" stroke-width="0.8"/><path d="M7.4 11.7h4.6" stroke="#555" stroke-width="0.8"/></svg>
<svg style="left:58px;top:484px" width="16" height="16" viewBox="0 0 16 16"><path d="M1.4 0.6q0.2 5 6 8.6l1.4 -1.2z" fill="#f2f2f2" stroke="#aaa" stroke-width="0.4"/><path d="M14.6 0.6q-0.2 5 -6 8.6l-1.4 -1.2z" fill="#e0e0e0" stroke="#aaa" stroke-width="0.4"/><circle cx="8" cy="7.6" r="0.7" fill="#777"/><circle cx="3.6" cy="12.4" r="2.5" fill="none" stroke="#d8000c" stroke-width="1.7"/><circle cx="12.4" cy="12.4" r="2.5" fill="none" stroke="#d8000c" stroke-width="1.7"/></svg>
<svg style="left:58px;top:519px" width="16" height="16" viewBox="0 0 16 16"><rect x="0.6" y="1.8" width="13.4" height="13.6" rx="1" fill="#d9a04f" stroke="#a8752c" stroke-width="0.6"/><rect x="1.6" y="2.8" width="2.8" height="11.6" fill="#e9bd7a"/><rect x="5" y="0.4" width="4.8" height="2.8" rx="0.6" fill="#e8e8e8" stroke="#888" stroke-width="0.5"/><rect x="6.2" y="4.6" width="9.2" height="10.4" fill="#f6f6f6" stroke="#8a8a8a" stroke-width="0.5"/><path d="M7.800000000000001 6.5h5.999999999999999" stroke="#555" stroke-width="0.8"/><path d="M7.800000000000001 8.4h5.999999999999999" stroke="#555" stroke-width="0.8"/><path d="M7.800000000000001 10.3h4.199999999999999" stroke="#555" stroke-width="0.8"/></svg>
<svg style="left:58px;top:568.5px" width="16" height="16" viewBox="0 0 16 16"><defs><linearGradient id="g11" x1="0" y1="0" x2="1" y2="1"><stop offset="0" stop-color="#f4f8fc"/><stop offset="1" stop-color="#a9bfd6"/></linearGradient></defs><rect x="0.8" y="0.8" width="9" height="9" fill="#e6eef7" stroke="#f8fbff" stroke-width="0.9"/><rect x="4.4" y="4" width="11" height="11.2" fill="url(#g11)" stroke="#f8fbff" stroke-width="0.9"/></svg>
<svg style="left:58px;top:603.5px" width="16" height="16" viewBox="0 0 16 16"><defs><linearGradient id="g11" x1="0" y1="0" x2="1" y2="1"><stop offset="0" stop-color="#f4f8fc"/><stop offset="1" stop-color="#a9bfd6"/></linearGradient></defs><rect x="0.8" y="0.8" width="9" height="9" fill="#e6eef7" stroke="#f8fbff" stroke-width="0.9"/><rect x="4.4" y="4" width="11" height="11.2" fill="url(#g11)" stroke="#f8fbff" stroke-width="0.9"/><path d="M7.6 9.4v-1.4a2.3 2.3 0 0 1 4.6 0v1.4" stroke="#111" stroke-width="1.1" fill="none"/><rect x="6.6" y="9" width="6.6" height="4.6" fill="#f6c228" stroke="#111" stroke-width="0.7"/><rect x="7.4" y="9.6" width="5" height="1.4" fill="#fff6c8"/></svg>
<svg style="left:58px;top:638.5px" width="16" height="16" viewBox="0 0 16 16"><defs><linearGradient id="g11" x1="0" y1="0" x2="1" y2="1"><stop offset="0" stop-color="#f4f8fc"/><stop offset="1" stop-color="#a9bfd6"/></linearGradient></defs><rect x="0.8" y="0.8" width="9" height="9" fill="#e6eef7" stroke="#f8fbff" stroke-width="0.9"/><rect x="4.4" y="4" width="11" height="11.2" fill="url(#g11)" stroke="#f8fbff" stroke-width="0.9"/><path d="M7.6 9.4v-1.4a2.3 2.3 0 0 1 4.6 0v0.6" stroke="#111" stroke-width="1.1" fill="none"/><rect x="6.6" y="9" width="6.6" height="4.6" fill="#8cc152" stroke="#111" stroke-width="0.7"/><rect x="7.4" y="9.6" width="5" height="1.4" fill="#eef8dc"/></svg>
<svg style="left:58px;top:687px" width="16" height="16" viewBox="0 0 16 16"><defs><linearGradient id="g12" x1="0" y1="0" x2="1" y2="1"><stop offset="0" stop-color="#eef4fb"/><stop offset="1" stop-color="#a9c0da"/></linearGradient></defs><rect x="0" y="0.6" width="1.6" height="1.6" fill="#000"/><rect x="14.4" y="0.6" width="1.6" height="1.6" fill="#000"/><rect x="0" y="14" width="1.6" height="1.6" fill="#000"/><rect x="14.4" y="14" width="1.6" height="1.6" fill="#000"/><path d="M3.4 8h6.4v5h-7.2z" fill="#dbe7f3" stroke="#eef3f8" stroke-width="0.6"/><circle cx="10" cy="6" r="3.5" fill="url(#g12)" stroke="#dfe8f2" stroke-width="0.5"/></svg>
<svg style="left:58px;top:722px" width="16" height="16" viewBox="0 0 16 16"><defs><linearGradient id="g12" x1="0" y1="0" x2="1" y2="1"><stop offset="0" stop-color="#eef4fb"/><stop offset="1" stop-color="#a9c0da"/></linearGradient></defs><rect x="5" y="0.6" width="1.6" height="1.6" fill="#000"/><rect x="14.4" y="0.6" width="1.6" height="1.6" fill="#000"/><rect x="0" y="14" width="1.6" height="1.6" fill="#000"/><rect x="14.4" y="14" width="1.6" height="1.6" fill="#000"/><path d="M2.8 8h4v1.4h3.4v3.8h-7.4z" fill="#f7d23e" stroke="#f9e58a" stroke-width="0.5"/><rect x="4.2" y="9.4" width="2.4" height="1.4" fill="#1a1a1a"/><circle cx="10.2" cy="5.8" r="3.5" fill="url(#g12)" stroke="#dfe8f2" stroke-width="0.5"/></svg>
<svg style="left:58px;top:771px" width="16" height="16" viewBox="0 0 16 16"><defs><linearGradient id="g13" x1="0.3" y1="0" x2="0.6" y2="1"><stop offset="0" stop-color="#ffffff"/><stop offset="0.5" stop-color="#dddddd"/><stop offset="1" stop-color="#101010"/></linearGradient></defs><path d="M0.4 1h15.2l-15.2 14z" fill="url(#g13)"/><path d="M0.4 1h15.2l-15.2 14z" fill="none" stroke="#000" stroke-width="0.5"/><path d="M15.8 2l-3.4 2.6l2.2 2.8l1.2 -0.9z" fill="#f5b800"/><path d="M12.4 4.6l-7.2 6.2q-1.6 1.8 -0.6 2.4q1.6 0 3.2 -1l6.8 -4.8z" fill="#2a2a2a"/><path d="M11.6 6l-5.6 4.8" stroke="#ddd" stroke-width="0.7"/></svg>
<svg style="left:58px;top:806px" width="16" height="16" viewBox="0 0 16 16"><path d="M0.6 0.6h14.8v4.4h-1q-0.4 -2.8 -3.4 -2.8h-1.2v10.4q0 1.6 2.2 1.7v1.1h-8v-1.1q2.2 -0.1 2.2 -1.7v-10.4h-1.200q-3 0 -3.400 2.800h-1z" fill="#000"/><path d="M8.6 3.4v9" stroke="#555" stroke-width="0.8"/></svg>
<svg style="left:58px;top:842.5px" width="16" height="14" viewBox="0 0 16 14"><path d="M1 10.4l5 -2l9.4 1.8l-5.2 2.6z" fill="#d8d8d8" stroke="#2a2a2a" stroke-width="0.5"/><path d="M1 7.6l5 -2l9.4 1.8l-5.2 2.6z" fill="#ececec" stroke="#2a2a2a" stroke-width="0.5"/><path d="M1 4.8l5 -2l9.4 1.8l-5.2 2.600z" fill="#ffffff" stroke="#2a2a2a" stroke-width="0.5"/></svg>
<svg style="left:58px;top:876.5px" width="16" height="16" viewBox="0 0 16 16"><rect x="0.5" y="0.8" width="15" height="14.4" fill="#efefea" stroke="#1a1a1a" stroke-width="0.7"/><rect x="0.9" y="1.2" width="14.2" height="1.9" fill="#8fb3de"/><path d="M6.4 6.4l-3.2 2.7l3.200 2.7M9.6 6.4l3.2 2.7l-3.200 2.7" stroke="#333" stroke-width="1" fill="none"/></svg>
<svg style="left:58px;top:911.5px" width="16" height="16" viewBox="0 0 16 16"><rect x="0.5" y="0.8" width="15" height="14.4" fill="#efefea" stroke="#1a1a1a" stroke-width="0.7"/><rect x="0.9" y="1.2" width="14.2" height="1.9" fill="#8fb3de"/><path d="M6.600 5.6q-1.600 0 -1.600 1.400v1q0 1.100 -1.100 1.100q1.100 0 1.100 1.100v1q0 1.400 1.600 1.400M9.400 5.6q1.600 0 1.600 1.400v1q0 1.100 1.100 1.100q-1.100 0 -1.100 1.100v1q0 1.400 -1.600 1.400" stroke="#333" stroke-width="1" fill="none"/></svg>
<svg style="left:61.7px;top:969px" width="8" height="11" viewBox="0 0 8 11"><path d="M7 0l-6.600 5.500l6.600 5.500z" fill="#eeeeec"/></svg>
<svg style="left:1431.5px;top:150.9px" width="14.6" height="5" viewBox="0 0 14.6 5"><path d="M0.300 0.800l1.600 3.400l1.700 -3.400l1.700 3.400l1.700 -3.400l1.700 3.400l1.700 -3.400l1.700 3.400l1.600 -3.400" stroke="#52c800" stroke-width="1.900" fill="none"/></svg>
<svg style="left:1488.3px;top:141px" width="16" height="16" viewBox="0 0 16 16"><defs><linearGradient id="g14" x1="0" y1="0" x2="1" y2="1"><stop offset="0" stop-color="#fff0a8"/><stop offset="1" stop-color="#f2b200"/></linearGradient></defs><rect x="0.600" y="6" width="8.200" height="8" fill="url(#g14)" stroke="#fff6c8" stroke-width="0.500"/><path d="M7.600 0.200v2.800l2.200 1.600v6.800l-2.200 1.600v2.800h2.200v-1.800h3v1.800h2.200v-2.800l-2.200 -1.600v-6.800l2.200 -1.600v-2.800h-2.200v1.800h-3v-1.800z" fill="#f6f6f6" stroke="#1a1a1a" stroke-width="0.400"/></svg>
<svg style="left:1552.4px;top:141.2px" width="16" height="16" viewBox="0 0 16 16"><path d="M8 0.400l7.400 7.400q0.500 0.600 -0.200 1.100l-2.200 1.300l1.400 1.300l-1.600 0.600l0.200 1.400l-2.200 -0.300l-0.600 1.400l-2.200 -0.600l-2.200 0.600l-0.600 -1.400l-2.200 0.300l0.200 -1.400l-1.600 -0.600l1.400 -1.300l-2.200 -1.300q-0.700 -0.500 -0.200 -1.100z" fill="#000"/><path d="M8 1.200l3.200 3.300l-1.500 1.100l-1 -0.800l-1.300 1.100l-1.100 -1l-1.700 0.400z" fill="#f2f2f2"/></svg>
<svg style="left:1615.5px;top:141.3px" width="16" height="16" viewBox="0 0 16 16"><defs><linearGradient id="g9" x1="0" y1="0" x2="1" y2="1"><stop offset="0" stop-color="#ffffff"/><stop offset="1" stop-color="#c8c8c8"/></linearGradient></defs><path d="M1.2 0.4h8.8l3.2 3.2v12.2h-12z" fill="url(#g9)" stroke="#8c8c8c" stroke-width="0.5"/><path d="M10.0 0.4v3.2h3.2z" fill="#f2f2f2" stroke="#8c8c8c" stroke-width="0.4"/><circle cx="6.200" cy="8.600" r="2" fill="none" stroke="#9a9a9a" stroke-width="1.300"/><path d="M7.600 10l4.600 4.400" stroke="#9a9a9a" stroke-width="1.600"/></svg>
<svg style="left:1680px;top:141px" width="16" height="16" viewBox="0 0 16 16"><path d="M0.600 0.600h14.800v4.400h-1q-0.400 -2.800 -3.400 -2.800h-1.200v10.400q0 1.600 2.200 1.700v1.100h-8v-1.100q2.200 -0.100 2.200 -1.700v-10.400h-1.200q-3 0 -3.400 2.800h-1z" fill="#000"/><path d="M8.600 3.400v9" stroke="#555" stroke-width="0.800"/></svg>
<svg style="left:1744px;top:140.8px" width="16" height="16" viewBox="0 0 16 16"><path d="M0.400 1h15.200l-15.200 14z" fill="url(#g13)"/><path d="M0.400 1h15.200l-15.200 14z" fill="none" stroke="#000" stroke-width="0.500"/><path d="M15.800 2l-3.400 2.600l2.200 2.800l1.200 -0.900z" fill="#f5b800"/><path d="M12.400 4.600l-7.200 6.200q-1.600 1.800 -0.600 2.400q1.600 0 3.200 -1l6.800 -4.800z" fill="#2a2a2a"/><path d="M11.600 6l-5.600 4.800" stroke="#ddd" stroke-width="0.700"/></svg>
<svg style="left:1808px;top:141px" width="16" height="16" viewBox="0 0 16 16"><defs><linearGradient id="g9" x1="0" y1="0" x2="1" y2="1"><stop offset="0" stop-color="#ffffff"/><stop offset="1" stop-color="#c8c8c8"/></linearGradient></defs><path d="M0.6 0.8h7.6000000000000005l3.2 3.2v11.399999999999999h-10.8z" fill="url(#g9)" stroke="#8c8c8c" stroke-width="0.5"/><path d="M8.2 0.8v3.2h3.2z" fill="#f2f2f2" stroke="#8c8c8c" stroke-width="0.4"/><path d="M6.200 8.400h7" stroke="#000" stroke-width="1.200"/><path d="M12.600 6l3.200 2.400l-3.200 2.400z" fill="#000"/></svg>
<svg style="left:1px;top:4px" width="26" height="26" viewBox="0 0 26 26"><defs><linearGradient id="g15" x1="0" y1="0" x2="1" y2="1"><stop offset="0" stop-color="#b8d0ee"/><stop offset="0.45" stop-color="#2f5ea5"/><stop offset="1" stop-color="#163a78"/></linearGradient></defs><defs><linearGradient id="g16" x1="0.3" y1="0" x2="0.5" y2="1"><stop offset="0" stop-color="#ffffff"/><stop offset="0.7" stop-color="#f0f0f0"/><stop offset="1" stop-color="#8a8a8a"/></linearGradient></defs><path d="M12.5 1.500q0.900 -0.300 1.700 0.400l9.500 9.600q1.100 1.300 -0.400 2.200l-9.600 4.300q-1 0.400 -2 0l-8.800 -3.800q-1.600 -0.800 -0.500 -2.200l9.200 -10z" fill="#000"/><path d="M12.800 3.400l4.200 4.300l-2.200 1.800l-2.200 -1.200l-1.600 2.800l-1.700 -1.600l-4.600 2.200l-0.600 -0.800z" fill="url(#g16)"/><path d="M13.600 3.600l8.900 9l-8 3.500q1.800 -3.400 -0.300 -5.600l2.600 -2.400z" fill="url(#g15)"/><path d="M4.800 15.400l4 -1l8 0.400l2.200 2l0.600 1.700l-4.400 2.200l1 1.500l-3.600 2.200l-1.600 -1.700l-2.200 -0.900l0.600 -1.700l-4.800 -2.300z" fill="#000"/><path d="M6.800 16.900l4.600 -1l3 1.400l-2.400 1.200z" fill="#4a4a4a"/><path d="M13.200 19.600l4.200 -1.800l-3.200 3l1.200 1.100l-2.800 1.500l-0.900 -1.400z" fill="#33507a"/><ellipse cx="7" cy="20.600" rx="1.200" ry="0.500" fill="#000"/><ellipse cx="21.500" cy="18.700" rx="1.500" ry="0.700" fill="#000"/><circle cx="19.800" cy="20.300" r="0.500" fill="#222"/></svg>
<svg style="left:1177.8px;top:888.5px" width="16" height="16" viewBox="0 0 16 16"><path d="M2 2l9 9.400" stroke="#e8e8e8" stroke-width="1.500"/><path d="M11 11.400l2.600 2.600" stroke="#3a78c8" stroke-width="2.600" stroke-linecap="round"/><path d="M14 2l-9.400 9.600" stroke="#e8e8e8" stroke-width="1.300"/><path d="M4.800 11.400l-2.600 2.600" stroke="#3a78c8" stroke-width="2.600" stroke-linecap="round"/><circle cx="2.600" cy="2.400" r="1.700" fill="none" stroke="#e8e8e8" stroke-width="1.100"/><path d="M12.600 1.200l2.200 2.200" stroke="#e8e8e8" stroke-width="1.600"/></svg>
<svg style="left:1592.5px;top:1045.5px" width="16" height="18" viewBox="0 0 16 18"><defs><linearGradient id="g17" x1="0" y1="0" x2="1" y2="1"><stop offset="0" stop-color="#ffffff"/><stop offset="0.35" stop-color="#ffffff"/><stop offset="0.7" stop-color="#fff3a0"/><stop offset="1" stop-color="#ecc830"/></linearGradient></defs><path d="M4.300 3.600a3.600 3.600 0 0 1 7 1.600l0.300 3" stroke="#000" stroke-width="1.500" fill="none"/><path d="M2.600 9.600l9.400 -2.200l1.800 7.200l-9.400 2.200z" fill="url(#g17)" stroke="#000" stroke-width="1.100" stroke-linejoin="round"/><circle cx="8" cy="11.200" r="1.050" fill="#000"/><path d="M7.600 11.500l0.500 2.300l1.100 -0.300l-0.500 -2.200z" fill="#000"/></svg>
<svg style="left:1626.5px;top:1046.7px" width="17" height="15" viewBox="0 0 17 15"><path d="M8.500 5v-4.400M5.700 5.600l-1.700 -4M11.300 5.600l1.700 -4M3.200 7.200l-2.600 -2.800M13.800 7.200l2.600 -2.800" stroke="#000" stroke-width="1.100"/><path d="M0.700 9.200q7.800 -8 15.600 0q-7.800 7 -15.600 0z" fill="#f4f4f4" stroke="#000" stroke-width="1.300"/><circle cx="8.500" cy="9" r="2.900" fill="#000"/><circle cx="7.300" cy="7.700" r="0.900" fill="#ddd"/></svg>
<svg style="left:1885.4px;top:123px" width="16" height="22" viewBox="0 0 16 22"><path d="M2.200 0.800v17.200l3.800 -3.600l2.600 6.200l3.200 -1.400l-2.700 -6h5.500z" fill="#000" stroke="#fff" stroke-width="1.300" stroke-linejoin="round"/></svg>
<svg style="left:1883.6px;top:156.8px" width="22" height="23" viewBox="0 0 22 23"><path d="M1.600 20q-0.600 -12 8 -16.600M9 3.400q5 -2.600 10 -2.200" stroke="#8a8a8a" stroke-width="0.900" fill="none"/><path d="M4.600 4.800l16.200 10.800l-4.600 1.600l-1 4.600z" fill="#000" stroke="#fff" stroke-width="1.200" stroke-linejoin="round"/><rect x="1.800" y="2.400" width="5.400" height="5.400" fill="#1414e0" stroke="#0000a0" stroke-width="0.600"/><rect x="17.600" y="0.600" width="3.600" height="3.600" fill="none" stroke="#5a5aff" stroke-width="1"/><rect x="0.600" y="18.400" width="3.600" height="3.600" fill="none" stroke="#5a5aff" stroke-width="1"/></svg>
<svg style="left:1884.1px;top:205.8px" width="20" height="20" viewBox="0 0 20 20"><defs><linearGradient id="g18" x1="0" y1="0" x2="1" y2="1"><stop offset="0" stop-color="#f2f7fc"/><stop offset="1" stop-color="#a4bdd8"/></linearGradient></defs><rect x="0.600" y="0.600" width="18.800" height="18.800" fill="#fff" stroke="#000" stroke-width="1.100"/><rect x="2" y="2" width="16" height="16" fill="url(#g18)"/></svg>
<svg style="left:1883.8px;top:239.500px" width="21" height="21" viewBox="0 0 21 21"><defs><radialGradient id="rg1" cx="0.350" cy="0.300" r="0.800"><stop offset="0" stop-color="#ffffff"/><stop offset="0.600" stop-color="#ffc6cc"/><stop offset="1" stop-color="#f59aa6"/></radialGradient></defs><circle cx="10.500" cy="10.500" r="9.600" fill="url(#rg1)" stroke="#1a1a1a" stroke-width="0.800"/></svg>
<svg style="left:1883.5px;top:275.5px" width="21" height="20" viewBox="0 0 21 20"><defs><linearGradient id="g19" x1="0" y1="0" x2="1" y2="1"><stop offset="0" stop-color="#fffbd2"/><stop offset="1" stop-color="#f0d955"/></linearGradient></defs><path d="M5.600 0.750l8.150 4.350l-2.500 8.800l-9.350 -0.650l-1.900 -7.500z" fill="#f4e99c" stroke="#fbf6d0" stroke-width="0.900" stroke-linejoin="round"/><path d="M5.600 0.750l8.150 4.350l-2.500 8.800l-9.350 -0.650l-1.900 -7.500z" fill="none" stroke="#6a6a50" stroke-width="0.350"/><path d="M13.100 4.500l2.500 4.700l5.000 0.700l-3.500 3.700l0.900 5.100l-4.700 -2.300l-4.500 2.500l0.700 -5.200l-3.700 -3.500l5.100 -0.900z" fill="url(#g19)" stroke="#5a5a40" stroke-width="0.500" stroke-linejoin="round"/><path d="M13.100 6l1.900 3.800l4 0.500" stroke="#fffef0" stroke-width="0.800" fill="none"/></svg>
<svg style="left:1884.75px;top:306.15px" width="19.5" height="23.5" viewBox="0 0 19.5 23.5"><defs><linearGradient id="g20" x1="0" y1="0" x2="1" y2="1"><stop offset="0" stop-color="#cfd1f1"/><stop offset="1" stop-color="#9497d4"/></linearGradient></defs><defs><linearGradient id="g21" x1="0" y1="0" x2="1" y2="1"><stop offset="0" stop-color="#2f3288"/><stop offset="1" stop-color="#7477c8"/></linearGradient></defs><path d="M10.900 0.600l8.100 6.900v10.600l-10 5l-9 -5.600v-11.250z" fill="#e6e7fa" stroke="#eeeeff" stroke-width="1" stroke-linejoin="round"/><path d="M0 6.250l10.900 -5.650l0.600 12.500l-11.500 4.400z" fill="url(#g20)"/><path d="M10.900 0.600l8.100 6.900v10.600l-7.500 -5z" fill="#e4e5f9"/><path d="M0 17.500l11.500 -4.400l7.500 5l-10 5z" fill="url(#g21)"/></svg>
<svg style="left:1880.8px;top:341.3px" width="24" height="24" viewBox="0 0 24 24"><path d="M12.04 11.40L12.20 11.39L12.37 11.41L12.55 11.46L12.72 11.53L12.89 11.63L13.05 11.76L13.19 11.92L13.32 12.11L13.42 12.32L13.49 12.55L13.53 12.80L13.54 13.06L13.50 13.33L13.43 13.61L13.32 13.88L13.16 14.15L12.96 14.40L12.72 14.64L12.45 14.85L12.13 15.03L11.79 15.18L11.41 15.29L11.02 15.36L10.60 15.37L10.18 15.34L9.75 15.26L9.33 15.12L8.91 14.93L8.51 14.69L8.14 14.39L7.80 14.05L7.50 13.66L7.25 13.22L7.05 12.76L6.91 12.26L6.84 11.73L6.83 11.20L6.89 10.65L7.02 10.10L7.22 9.56L7.50 9.04L7.85 8.54L8.26 8.08L8.75 7.67L9.28 7.30L9.88 6.99L10.51 6.75L11.19 6.58L11.89 6.49L12.62 6.48L13.35 6.55L14.07 6.71L14.79 6.95L15.48 7.27L16.13 7.68L16.74 8.17L17.29 8.73L17.77 9.36L18.17 10.05L18.49 10.79L18.72 11.57L18.85 12.38L18.88 13.22L18.80 14.06L18.62 14.90L18.32 15.72L17.92 16.51L17.42 17.27L16.82 17.97L16.13 18.60L15.35 19.16L14.50 19.63L13.59 20.01L12.62 20.29L11.61 20.45L10.58 20.50L9.54 20.44L8.50 20.26L7.48 19.95L6.49 19.53L5.55 18.99L4.68 18.35L3.88 17.60L3.18 16.76L2.58 15.84L2.09 14.85L1.73 13.80L1.49 12.70L1.40 11.57L1.45 10.43L1.64 9.29L1.97 8.17L2.45 7.08L3.06 6.05L3.81 5.08L4.68 4.20L5.66 3.41L6.75 2.73L7.92 2.17L9.16 1.75L10.46 1.46L11.80 1.32L13.16 1.33L14.52 1.50L15.86 1.82L17.16 2.29L18.41 2.92L19.58 3.68L20.65 4.58L21.62 5.59L22.45 6.73L23.15 7.95L23.70 9.26L24.08 10.63L24.29 12.04L24.32 13.48L24.17 14.92L23.84 16.35L23.34 17.75L22.65 19.08" stroke="#000" stroke-width="1.300" fill="none"/></svg>
<svg style="left:1882.3px;top:388px" width="24" height="24" viewBox="0 0 24 24"><defs><linearGradient id="g22" x1="0" y1="0" x2="1" y2="0"><stop offset="0" stop-color="#e4f1fa"/><stop offset="0.5" stop-color="#8fbfe0"/><stop offset="1" stop-color="#4f8fc4"/></linearGradient></defs><path d="M1 1.600h8" stroke="#4a4a4a" stroke-width="0.900"/><path d="M4 1.800q5 2 4.600 9q-0.300 6 -4.400 9.400" stroke="#0c0c0c" stroke-width="1.100" fill="none"/><path d="M3.500 21.500h8" stroke="#000" stroke-width="1.100"/><rect x="0.500" y="19.600" width="3.700" height="3.700" fill="#fff" stroke="#000" stroke-width="0.800"/><circle cx="11.400" cy="21.500" r="1.050" fill="#fff" stroke="#000" stroke-width="0.700"/><g transform="rotate(22 18 8)"><rect x="13.400" y="-0.500" width="8.600" height="10.600" rx="1.200" fill="url(#g22)" stroke="#16324e" stroke-width="0.700"/><rect x="15.200" y="10.100" width="5" height="2.400" rx="0.600" fill="#f6c431" stroke="#3a2a00" stroke-width="0.500"/><path d="M17.100 12.500h1.200l-0.300 9.500h-0.600z" fill="#f4f4f4" stroke="#222" stroke-width="0.400"/></g></svg>
<svg style="left:1882.3px;top:421.8px" width="24" height="24" viewBox="0 0 24 24"><defs><linearGradient id="g23" x1="0" y1="0" x2="1" y2="0"><stop offset="0" stop-color="#ffe36a"/><stop offset="0.45" stop-color="#fbc21c"/><stop offset="1" stop-color="#e79a00"/></linearGradient></defs><defs><linearGradient id="g24" x1="0" y1="0" x2="1" y2="0"><stop offset="0" stop-color="#ffffff"/><stop offset="1" stop-color="#ffd98a"/></linearGradient></defs><path d="M1 2h5.400l-3.600 5.600q0.500 1.500 2 2.600" stroke="#4a4a4a" stroke-width="0.900" fill="none"/><path d="M7.200 10.600q-1.800 3 -0.400 7.200q1.400 3 5.200 3q4.600 -0.400 8 -5.600" stroke="#000" stroke-width="1.500" fill="none"/><g transform="rotate(27 15 10)"><path d="M10.400 1.200q4.600 -3 9.200 0v9.600h-9.200z" fill="url(#g23)" stroke="#6a4a00" stroke-width="0.500"/><path d="M10.400 10.800h9.200l-1.800 5.200l-2.800 4.400l-2.800 -4.400z" fill="url(#g24)" stroke="#5a4a2a" stroke-width="0.500"/><path d="M13.700 18.400l1.300 2.400l1.300 -2.400z" fill="#111"/></g></svg>
<svg style="left:1882.3px;top:455.5px" width="24" height="24" viewBox="0 0 24 24"><path d="M0.800 3.200q5.600 -1.600 6.600 3q0.800 5 -1 9q-1.600 5.600 3.600 6q5 -0.200 8 -3.200q3 1.400 5.600 1.200q-3.600 2.600 -7.600 1.800q-3.800 2.800 -8.400 2.200q-6.800 -1.800 -4.200 -9.400q1.800 -6.600 -2.600 -10.600z" fill="#000"/><g transform="rotate(24 16 11)"><rect x="12.600" y="0" width="7.400" height="3.600" fill="#4f8fd0" stroke="#1d3d5c" stroke-width="0.500"/><rect x="12.600" y="3.600" width="7.400" height="2.600" fill="#e02020"/><path d="M12.600 6.200h7.400l0.800 5.600l-4.500 8.600l-4.500 -8.600z" fill="#f9c61f" stroke="#1a1a1a" stroke-width="0.700"/><path d="M16.300 20v-7" stroke="#1a1a1a" stroke-width="0.800"/><circle cx="16.300" cy="12.400" r="1" fill="#1a1a1a"/><path d="M13.600 8l1.400 9" stroke="#fff3c0" stroke-width="1.200"/></g></svg>
<svg style="left:1882.55px;top:490.25px" width="23.5" height="24.5" viewBox="0 0 23.5 24.5"><path d="M0.600 20.600l6.800 -18.600h3l7 18.600h-3.500l-1.600 -4.600h-7.200l-1.600 4.600zM6.200 13.200h5.300l-2.650 -7.700z" fill="#000" stroke="#000" stroke-width="0.900" stroke-linejoin="round"/><path d="M15.400 1.600h2.800M20.200 1.600h2.800M15.400 22.900h2.800M20.200 22.900h2.800M19.200 1.600v21.300" stroke="#000" stroke-width="3"/><path d="M15.600 1.600h2.600q1 0 1 1q0 -1 1 -1h2.600M15.600 22.900h2.600q1 0 1 -1q0 1 1 1h2.600M19.200 2.400v19.700" stroke="#fff" stroke-width="1.400" fill="none"/></svg>
<svg style="left:1883px;top:539px" width="22" height="22" viewBox="0 0 22 22"><defs><linearGradient id="g25" x1="0" y1="0" x2="1" y2="1"><stop offset="0" stop-color="#ffffff"/><stop offset="0.45" stop-color="#a8dcae"/><stop offset="1" stop-color="#2f9a40"/></linearGradient></defs><rect x="0.500" y="0.500" width="21" height="21" fill="url(#g25)" stroke="#c4e8c8" stroke-width="1"/><path d="M5 5.600l11.600 10.800" stroke="#1a1a1a" stroke-width="1.100"/><rect x="2.600" y="3.400" width="4.400" height="4.400" rx="1.200" fill="#f4f4f4" stroke="#1a1a1a" stroke-width="0.900"/><rect x="14.600" y="14" width="4.400" height="4.400" rx="1.200" fill="#f4f4f4" stroke="#1a1a1a" stroke-width="0.900"/></svg>
<svg style="left:1883.9px;top:573.9px" width="20.2" height="20.2" viewBox="0 0 20.2 20.2"><defs><linearGradient id="g26" x1="0" y1="0" x2="1" y2="1"><stop offset="0" stop-color="#86bcc8"/><stop offset="1" stop-color="#56a672"/></linearGradient></defs><path d="M5.600 2l13.200 4.300l-5 12.600l-11.900 -5z" fill="url(#g26)"/><rect x="0.6" y="0.6" width="4" height="4" rx="0.800" fill="#fff" stroke="#000" stroke-width="0.900"/><rect x="15.6" y="0.6" width="4" height="4" rx="0.800" fill="#fff" stroke="#000" stroke-width="0.900"/><rect x="0.6" y="15.6" width="4" height="4" rx="0.800" fill="#fff" stroke="#000" stroke-width="0.900"/><rect x="15.6" y="15.6" width="4" height="4" rx="0.800" fill="#fff" stroke="#000" stroke-width="0.900"/></svg>
<svg style="left:1883.3px;top:604.5px" width="22" height="26" viewBox="0 0 22 26"><path d="M3.400 20.800l9.400 -12.200l2.600 2l-9.400 12.200q-2.200 0.800 -2.600 -2z" fill="#bfe0f8" stroke="#1a3a5a" stroke-width="0.800"/><path d="M5.400 19.200l7.200 -9.400" stroke="#fff" stroke-width="1"/><path d="M11 6.800l6.200 4.800l1.200 -1.600l-1.400 -1.200q4.400 -3 3.400 -6.200q-2.600 -2.800 -6.400 1l-1.400 -1.200z" fill="#000"/><circle cx="3" cy="24" r="1.300" fill="#2a6ac8"/></svg>
<svg style="left:1882.3px;top:638.8px" width="24" height="25" viewBox="0 0 24 25"><defs><linearGradient id="g27" x1="0" y1="0" x2="1" y2="0"><stop offset="0" stop-color="#d7ecfa"/><stop offset="1" stop-color="#4a86b8"/></linearGradient></defs><ellipse cx="11" cy="21.600" rx="9.600" ry="2.400" fill="#bff0c8" stroke="#3aa050" stroke-width="0.600"/><path d="M6.800 9.600q-2.800 4.600 -1.600 8.600q1.400 2.600 4 3.200l1.800 -0.200q-2.600 -2.400 -1.800 -8.600z" fill="#7fd890"/><g transform="rotate(18 14 9)"><path d="M7 2.400h14l-1.200 13.400h-11.600z" fill="url(#g27)" stroke="#0e2a44" stroke-width="0.800"/><ellipse cx="14" cy="2.400" rx="7" ry="1.800" fill="#2a2a2a" stroke="#0e2a44" stroke-width="0.600"/><path d="M7 3q-5.600 5.600 2.600 8.600" stroke="#111" stroke-width="0.900" fill="none"/><circle cx="9.600" cy="11.600" r="1.100" fill="#111"/></g></svg>
<svg style="left:1882.8px;top:689.8px" width="23" height="23" viewBox="0 0 23 23"><defs><linearGradient id="g28" x1="0" y1="0" x2="0" y2="1"><stop offset="0" stop-color="#d8d8d8"/><stop offset="0.5" stop-color="#a0a0a0"/><stop offset="0.62" stop-color="#8c8c8c"/><stop offset="1" stop-color="#e8e8e8"/></linearGradient></defs><path d="M0.800 13.600h6q3.200 -1 4.200 -6q1.200 -6 6.400 -5.800q3.800 0.600 3.600 4.400q-1.800 -2.600 -4.400 -1.200q-2 1.800 -0.800 5.200q1 2.600 3.400 3.400h2.400v8h-20.800z" fill="url(#g28)" stroke="#f2f2f2" stroke-width="1"/></svg>
<svg style="left:1882.8px;top:723px" width="23" height="24" viewBox="0 0 23 24"><defs><linearGradient id="g29" x1="0" y1="0" x2="1" y2="0"><stop offset="0" stop-color="#3a9a2a"/><stop offset="0.5" stop-color="#7ae060"/><stop offset="1" stop-color="#2a8a1a"/></linearGradient></defs><g transform="rotate(-12 15 14)"><rect x="9.600" y="9" width="10.600" height="13" rx="2" fill="url(#g29)" stroke="#124a0a" stroke-width="0.700"/><rect x="11.200" y="5.600" width="7" height="3.400" fill="#f6e7a8" stroke="#5a4a1a" stroke-width="0.500"/><rect x="12.600" y="3" width="4" height="2.600" fill="#fafafa" stroke="#333" stroke-width="0.500"/><path d="M11 19.600q4.600 2 8 0" stroke="#d8ffd0" stroke-width="1.200" fill="none"/></g><circle cx="2" cy="2" r="0.8" fill="#0a0a0a"/><circle cx="5.2" cy="1.2" r="0.7" fill="#0a0a0a"/><circle cx="1.6" cy="5.6" r="0.9" fill="#0a0a0a"/><circle cx="5" cy="5" r="1" fill="#0a0a0a"/><circle cx="8" cy="3.6" r="0.8" fill="#0a0a0a"/><circle cx="3.6" cy="8.8" r="0.8" fill="#0a0a0a"/><circle cx="7.4" cy="7.4" r="0.7" fill="#0a0a0a"/><circle cx="9.6" cy="6" r="0.6" fill="#0a0a0a"/><circle cx="1" cy="9.6" r="0.6" fill="#0a0a0a"/></svg>
<svg style="left:1882.3px;top:757.5px" width="24" height="23" viewBox="0 0 24 23"><defs><linearGradient id="g30" x1="0" y1="0" x2="1" y2="1"><stop offset="0" stop-color="#f6c0a8"/><stop offset="1" stop-color="#f6a898"/></linearGradient></defs><path d="M0 21.400h9.600M15 21.400h9" stroke="#111" stroke-width="1"/><g transform="rotate(27 12 11)"><rect x="6.600" y="0.600" width="10.800" height="12.400" fill="url(#g30)" stroke="#4a2a2a" stroke-width="0.500"/><rect x="6.600" y="13" width="10.800" height="7.600" fill="#2a2af0" stroke="#101080" stroke-width="0.500"/></g></svg>
<svg style="left:1882.3px;top:790.7px" width="24" height="24" viewBox="0 0 24 24"><defs><linearGradient id="g31" x1="0" y1="0" x2="1" y2="1"><stop offset="0" stop-color="#dcebfa"/><stop offset="1" stop-color="#86aedb"/></linearGradient></defs><path d="M12.600 4h4.600q2.400 0 2.400 2.400v10M9.600 8v5.400M5 16.400v-3h5M9.600 13.400h10" stroke="#111" stroke-width="1" fill="none"/><rect x="6" y="0.6" width="7" height="7" fill="url(#g31)" stroke="#111" stroke-width="0.900"/><rect x="7.1" y="1.7000000000000002" width="4.800" height="4.800" fill="none" stroke="#f4f9ff" stroke-width="0.700"/><rect x="0.6" y="16.4" width="7" height="7" fill="url(#g31)" stroke="#111" stroke-width="0.900"/><rect x="1.7000000000000002" y="17.5" width="4.800" height="4.800" fill="none" stroke="#f4f9ff" stroke-width="0.700"/><rect x="16.2" y="16.4" width="7" height="7" fill="url(#g31)" stroke="#111" stroke-width="0.900"/><rect x="17.3" y="17.5" width="4.800" height="4.800" fill="none" stroke="#f4f9ff" stroke-width="0.700"/><rect x="9.600" y="9.400" width="7.400" height="4.200" fill="#f7c52a" stroke="#111" stroke-width="0.800"/><rect x="10.600" y="10.300" width="5.400" height="1.300" fill="#fff0a8"/></svg>
<svg style="left:1880px;top:836px" width="28" height="28" viewBox="0 0 28 28"><defs><radialGradient id="rg2" cx="0.350" cy="0.300" r="0.900"><stop offset="0" stop-color="#ffffff"/><stop offset="1" stop-color="#b4cbe2"/></radialGradient><linearGradient id="zh" x1="0" y1="1" x2="1" y2="0"><stop offset="0" stop-color="#e08a00"/><stop offset="0.500" stop-color="#ffb81e"/><stop offset="1" stop-color="#ffd878"/></linearGradient></defs><path d="M16.200 16l6.600 5.200" stroke="#7a4a00" stroke-width="5.400" stroke-linecap="round"/><path d="M16.200 16l6.600 5.200" stroke="url(#zh)" stroke-width="4" stroke-linecap="round"/><path d="M14 14.400l3 2.400" stroke="#9a9a9a" stroke-width="3"/><circle cx="10" cy="10.300" r="7.200" fill="url(#rg2)" stroke="#e8e8e8" stroke-width="1.500"/><circle cx="10" cy="10.300" r="8.100" fill="none" stroke="#1a1a1a" stroke-width="0.700"/><circle cx="10" cy="10.300" r="6.400" fill="none" stroke="#3a3a3a" stroke-width="0.400"/></svg>
<svg style="left:1882.6px;top:870.8px" width="24" height="26" viewBox="0 0 24 26"><defs><linearGradient id="g32" x1="0" y1="0" x2="1" y2="0"><stop offset="0" stop-color="#fdf0ea"/><stop offset="1" stop-color="#f3bfae"/></linearGradient></defs><g transform="rotate(-29 12 13)"><rect x="6.600" y="1.600" width="10.600" height="22.600" fill="url(#g32)" stroke="#1a1a1a" stroke-width="0.900"/><path d="M6.600 4.600h3.600M6.600 7.400h2.400M6.600 10.200h3.600M6.600 13h2.400M6.600 15.800h3.600M6.600 18.600h2.400M6.600 21.400h3.600" stroke="#1a1a1a" stroke-width="0.800"/></g></svg>
<span style="font-size:17.5px;color:#000000;left:30.27px;top:17.00px;transform:scaleX(1.0335);">readme merged.pdf - Inkscape</span>
<span style="font-size:18px;color:#eeeeec;left:1350.49px;top:52.00px;transform:scaleX(1.0053);">Help</span>
<span style="font-size:18px;color:#eeeeec;left:1403.45px;top:52.00px;transform:scaleX(0.9489);">Extensions</span>
<span style="font-size:18px;color:#eeeeec;left:1502.45px;top:52.00px;transform:scaleX(0.9459);">Filters</span>
<span style="font-size:18px;color:#eeeeec;left:1565.00px;top:52.00px;transform:scaleX(0.9542);">Text</span>
<span style="font-size:18px;color:#eeeeec;left:1611.55px;top:52.00px;transform:scaleX(0.9481);">Path</span>
<span style="font-size:18px;color:#eeeeec;left:1662.00px;top:52.00px;transform:scaleX(1.0111);">Object</span>
<span style="font-size:18px;color:#eeeeec;left:1729.67px;top:52.00px;transform:scaleX(0.9266);">Layer</span>
<span style="font-size:18px;color:#eeeeec;left:1787.00px;top:52.00px;transform:scaleX(0.9398);">View</span>
<span style="font-size:18px;color:#eeeeec;left:1839.62px;top:52.00px;transform:scaleX(0.9795);">Edit</span>
<span style="font-size:18px;color:#eeeeec;left:1885.59px;top:52.00px;transform:scaleX(0.9109);">File</span>
<span style="font-size:18px;color:#eeeeec;left:659.63px;top:92.00px;transform:scaleX(1.1163);">mm</span>
<span style="font-size:18px;color:#eeeeec;left:805.75px;top:92.00px;transform:scaleX(0.9437);">3.355</span>
<span style="font-size:18px;color:#eeeeec;left:853.27px;top:92.00px;transform:scaleX(0.9844);">H:</span>
<span style="font-size:18px;color:#eeeeec;left:1001.25px;top:92.00px;transform:scaleX(0.9674);">28.379</span>
<span style="font-size:18px;color:#eeeeec;left:1059.50px;top:92.00px;transform:scaleX(0.9921);">W:</span>
<span style="font-size:18px;color:#eeeeec;left:1180.75px;top:92.00px;transform:scaleX(0.9765);">41.414</span>
<span style="font-size:18px;color:#eeeeec;left:1239.25px;top:92.00px;transform:scaleX(0.9159);">Y:</span>
<span style="font-size:18px;color:#eeeeec;left:1354.50px;top:92.00px;transform:scaleX(0.9629);">29.630</span>
<span style="font-size:18px;color:#eeeeec;left:1412.50px;top:92.00px;transform:scaleX(0.9059);">X:</span>
<span style="font-size:13.6px;color:#eeeeec;left:126.70px;top:125.00px;">100-</span>
<span style="font-size:13.6px;color:#eeeeec;left:227.70px;top:125.00px;">0</span>
<span style="font-size:13.6px;color:#eeeeec;left:326.70px;top:125.00px;">100</span>
<span style="font-size:13.6px;color:#eeeeec;left:427.70px;top:125.00px;">200</span>
<span style="font-size:13.6px;color:#eeeeec;left:527.70px;top:125.00px;">300</span>
<span style="font-size:13.6px;color:#eeeeec;left:627.70px;top:125.00px;">400</span>
<span style="font-size:13.6px;color:#eeeeec;left:727.70px;top:125.00px;">500</span>
<span style="font-size:13.6px;color:#eeeeec;left:827.70px;top:125.00px;">600</span>
<span style="font-size:13.6px;color:#eeeeec;left:927.70px;top:125.00px;">700</span>
<span style="font-size:13.6px;color:#eeeeec;left:1027.70px;top:125.00px;">800</span>
<span style="font-size:13.6px;color:#eeeeec;left:1127.70px;top:125.00px;">9</span>
<span style="font-size:13.6px;color:#eeeeec;left:1140.30px;top:162.00px;">0</span>
<span style="font-size:13.6px;color:#eeeeec;left:1139.30px;top:262.00px;">1</span>
<span style="font-size:13.6px;color:#eeeeec;left:1140.30px;top:275.00px;">0</span>
<span style="font-size:13.6px;color:#eeeeec;left:1140.30px;top:289.00px;">0</span>
<span style="font-size:13.6px;color:#eeeeec;left:1140.30px;top:362.00px;">2</span>
<span style="font-size:13.6px;color:#eeeeec;left:1140.30px;top:375.00px;">0</span>
<span style="font-size:13.6px;color:#eeeeec;left:1140.30px;top:389.00px;">0</span>
<span style="font-size:13.6px;color:#eeeeec;left:1140.30px;top:462.00px;">3</span>
<span style="font-size:13.6px;color:#eeeeec;left:1140.30px;top:475.00px;">0</span>
<span style="font-size:13.6px;color:#eeeeec;left:1140.30px;top:489.00px;">0</span>
<span style="font-size:13.6px;color:#eeeeec;left:1140.30px;top:562.00px;">4</span>
<span style="font-size:13.6px;color:#eeeeec;left:1140.30px;top:575.00px;">0</span>
<span style="font-size:13.6px;color:#eeeeec;left:1140.30px;top:589.00px;">0</span>
<span style="font-size:13.6px;color:#eeeeec;left:1140.30px;top:662.00px;">5</span>
<span style="font-size:13.6px;color:#eeeeec;left:1140.30px;top:675.00px;">0</span>
<span style="font-size:13.6px;color:#eeeeec;left:1140.30px;top:689.00px;">0</span>
<span style="font-size:13.6px;color:#eeeeec;left:1140.30px;top:762.00px;">6</span>
<span style="font-size:13.6px;color:#eeeeec;left:1140.30px;top:775.00px;">0</span>
<span style="font-size:13.6px;color:#eeeeec;left:1140.30px;top:789.00px;">0</span>
<span style="font-size:13.6px;color:#eeeeec;left:1140.30px;top:862.00px;">7</span>
<span style="font-size:13.6px;color:#eeeeec;left:1140.30px;top:875.00px;">0</span>
<span style="font-size:13.6px;color:#eeeeec;left:1140.30px;top:889.00px;">0</span>
<span style="font-size:13.6px;color:#eeeeec;left:1140.30px;top:962.00px;">8</span>
<span style="font-size:18px;color:#eeeeec;left:1314.40px;top:150.00px;transform:scaleX(0.9600);">Check Spelling</span>
<span style="font-size:18px;color:#eeeeec;left:1601.49px;top:184.00px;transform:scaleX(1.0147);">Not in dictionary:</span>
<span style="font-size:18px;color:#eeeeec;font-weight:700;left:1744.00px;top:184.00px;transform:scaleX(1.0070);">functonality</span>
<span style="font-size:18px;color:#eeeeec;left:1205.00px;top:221.00px;transform:scaleX(0.9813);">Accept</span>
<span style="font-size:18px;color:#eeeeec;left:1184.49px;top:260.00px;transform:scaleX(1.0068);">Ignore once</span>
<span style="font-size:18px;color:#eeeeec;left:1205.98px;top:299.00px;transform:scaleX(1.0154);">Ignore</span>
<span style="font-size:18px;color:#eeeeec;left:1215.20px;top:338.00px;transform:scaleX(1.0736);">Add</span>
<span style="font-size:18px;color:#8b8b8a;font-weight:700;left:1732.30px;top:217.00px;transform:scaleX(0.9504);">Suggestions:</span>
<span style="font-size:18px;color:#ffffff;left:1746.00px;top:246.00px;transform:scaleX(1.0100);">functionality</span>
<span style="font-size:18px;color:#eeeeec;left:1747.00px;top:277.00px;">functionalist</span>
<span style="font-size:18px;color:#eeeeec;left:1751.40px;top:308.00px;transform:scaleX(1.0061);">functionally</span>
<span style="font-size:18px;color:#eeeeec;left:1754.48px;top:339.00px;transform:scaleX(1.0170);">punctuality</span>
<span style="font-size:18px;color:#eeeeec;left:1764.80px;top:370.00px;transform:scaleX(1.0151);">functional</span>
<span style="font-size:18px;color:#eeeeec;left:1733.50px;top:401.00px;transform:scaleX(0.9948);">functionalities</span>
<span style="font-size:18px;color:#eeeeec;left:1640.71px;top:898.00px;transform:scaleX(0.9858);">Unknown (en)</span>
<span style="font-size:18px;color:#eeeeec;left:1767.53px;top:898.00px;transform:scaleX(0.9662);">Language</span>
<span style="font-size:18px;color:#8a8a89;left:1192.00px;top:960.00px;transform:scaleX(0.9523);">Start</span>
<span style="font-size:18px;color:#eeeeec;left:1281.00px;top:960.00px;transform:scaleX(0.9860);">Stop</span>
<span style="font-size:18px;color:#eeeeec;left:71.80px;top:1056.00px;transform:scaleX(0.9469);">0.00°</span>
<span style="font-size:18px;color:#eeeeec;left:142.46px;top:1056.00px;transform:scaleX(0.8376);">R:</span>
<span style="font-size:18px;color:#eeeeec;left:224.44px;top:1056.00px;transform:scaleX(0.9615);">100%</span>
<span style="font-size:18px;color:#eeeeec;left:290.00px;top:1056.00px;transform:scaleX(0.8669);">Z:</span>
<span style="font-size:18px;color:#eeeeec;left:314.00px;top:1043.00px;transform:scaleX(0.9538);">829.00</span>
<span style="font-size:18px;color:#eeeeec;left:382.50px;top:1043.00px;transform:scaleX(0.8747);">X:</span>
<span style="font-size:18px;color:#eeeeec;left:314.00px;top:1068.00px;transform:scaleX(0.9538);">240.00</span>
<span style="font-size:18px;color:#eeeeec;left:383.00px;top:1068.00px;transform:scaleX(0.8992);">Y:</span>
<span style="font-size:18px;color:#eeeeec;font-weight:700;left:493.00px;top:1056.00px;transform:scaleX(0.9697);">Text</span>
<span style="font-size:18px;color:#eeeeec;left:537.30px;top:1056.00px;">(Calibri, 11.04 pt) in group</span>
<span style="font-size:18px;color:#eeeeec;font-style:italic;left:749.80px;top:1056.00px;transform:scaleX(0.9832);">g1078</span>
<span style="font-size:18px;color:#eeeeec;left:804.03px;top:1056.00px;transform:scaleX(0.9656);">(layer</span>
<span style="font-size:18px;color:#eeeeec;font-weight:700;left:851.39px;top:1056.00px;transform:scaleX(1.0078);">readme merged</span>
<span style="font-size:18px;color:#eeeeec;left:986.50px;top:1056.00px;transform:scaleX(0.9876);">). Click selection again to toggle scale/rotation handles.</span>
<span style="font-size:15px;color:#eeeeec;font-weight:700;left:1451.50px;top:1056.00px;transform:scaleX(1.0042);">•readme merged</span>
<span style="font-size:18px;color:#eeeeec;left:1695.04px;top:1056.00px;transform:scaleX(0.9579);">100</span>
<span style="font-size:18px;color:#eeeeec;left:1727.90px;top:1056.00px;transform:scaleX(0.9333);">O:</span>
<span style="font-size:18px;color:#eeeeec;left:1747.70px;top:1068.00px;transform:scaleX(0.9437);">0.353</span>
<span style="font-size:18px;color:#eeeeec;font-style:italic;left:1801.90px;top:1068.00px;transform:scaleX(0.9763);">None</span>
<span style="font-size:18px;color:#eeeeec;left:1864.38px;top:1043.00px;transform:scaleX(0.9195);">Fill:</span>
<span style="font-size:18px;color:#eeeeec;left:1865.30px;top:1068.00px;transform:scaleX(0.9050);">Stroke:</span>
<span style="font-size:10.5px;color:#8c8c8c;font-weight:700;left:1431.80px;top:146.00px;transform:scaleX(1.0160);">Ab</span>
<div id="doc" style="left:0;top:0;width:1920px;height:1080px;will-change:transform;">
<span style="font-size:13.2px;color:#000000;left:845.76px;top:210.00px;transform:scaleX(0.9902);">Users Guide</span>
<span style="font-size:15.8px;color:#365f8d;font-weight:700;left:326.25px;top:260.00px;transform:scaleX(0.9538);">TABLE OF CONTENTS</span>
<span style="font-size:13.2px;color:#000000;left:321.25px;top:289.00px;transform:scaleX(0.9078);">VIEWER</span>
<span style="font-size:13.2px;color:#000000;left:915.50px;top:289.00px;transform:scaleX(0.9286);">2</span>
<span style="font-size:16.5px;color:#000000;letter-spacing:-0.8791950000000002px;left:368.67px;top:287.00px;">...................................................................................................................................................</span>
<span style="font-size:13.2px;color:#000000;left:335.23px;top:315.00px;transform:scaleX(1.0218);">Basic funct onality</span>
<span style="font-size:13.2px;color:#000000;left:915.50px;top:315.00px;transform:scaleX(0.9286);">2</span>
<span style="font-size:16.5px;color:#000000;letter-spacing:-0.8791950000000002px;left:446.48px;top:313.00px;">..............................................................................................................................</span>
<span style="font-size:13.2px;color:#000000;left:350.75px;top:340.00px;transform:scaleX(0.9801);">Toolbars</span>
<span style="font-size:13.2px;color:#000000;left:915.50px;top:340.00px;transform:scaleX(0.9286);">2</span>
<span style="font-size:16.5px;color:#000000;letter-spacing:-0.8791950000000002px;left:402.01px;top:338.00px;">..........................................................................................................................................</span>
<span style="font-size:13.2px;color:#000000;left:349.71px;top:366.00px;transform:scaleX(1.0373);">Help</span>
<span style="font-size:13.2px;color:#000000;left:915.50px;top:366.00px;transform:scaleX(0.9286);">3</span>
<span style="font-size:16.5px;color:#000000;letter-spacing:-0.8791950000000002px;left:379.78px;top:364.00px;">................................................................................................................................................</span>
<span style="font-size:13.2px;color:#000000;left:350.75px;top:392.00px;">The document area</span>
<span style="font-size:13.2px;color:#000000;left:915.50px;top:392.00px;transform:scaleX(0.9286);">5</span>
<span style="font-size:16.5px;color:#000000;letter-spacing:-0.8791950000000002px;left:468.71px;top:390.00px;">........................................................................................................................</span>
<span style="font-size:13.2px;color:#000000;left:349.74px;top:418.00px;transform:scaleX(1.0103);">Navigat on</span>
<span style="font-size:13.2px;color:#000000;left:915.50px;top:418.00px;transform:scaleX(0.9286);">5</span>
<span style="font-size:16.5px;color:#000000;letter-spacing:-0.8791950000000002px;left:416.84px;top:416.00px;">......................................................................................................................................</span>
<span style="font-size:13.2px;color:#000000;left:350.75px;top:444.00px;transform:scaleX(0.9614);">Closing f les</span>
<span style="font-size:13.2px;color:#000000;left:915.50px;top:444.00px;transform:scaleX(0.9286);">5</span>
<span style="font-size:16.5px;color:#000000;letter-spacing:-0.8791950000000002px;left:424.25px;top:442.00px;">....................................................................................................................................</span>
<span style="font-size:13.2px;color:#000000;left:349.72px;top:470.00px;transform:scaleX(1.0302);">Document opt ons</span>
<span style="font-size:13.2px;color:#000000;left:915.50px;top:470.00px;transform:scaleX(0.9286);">5</span>
<span style="font-size:16.5px;color:#000000;letter-spacing:-0.8791950000000002px;left:461.30px;top:468.00px;">..........................................................................................................................</span>
<span style="font-size:13.2px;color:#000000;left:350.75px;top:496.00px;">Thumbnails</span>
<span style="font-size:13.2px;color:#000000;left:915.50px;top:496.00px;transform:scaleX(0.9286);">5</span>
<span style="font-size:16.5px;color:#000000;letter-spacing:-0.8791950000000002px;left:420.54px;top:494.00px;">.....................................................................................................................................</span>
<span style="font-size:13.2px;color:#000000;left:349.75px;top:522.00px;">Bookmarks</span>
<span style="font-size:13.2px;color:#000000;left:915.50px;top:522.00px;transform:scaleX(0.9286);">6</span>
<span style="font-size:16.5px;color:#000000;letter-spacing:-0.8791950000000002px;left:420.54px;top:520.00px;">.....................................................................................................................................</span>
<span style="font-size:13.2px;color:#000000;left:350.75px;top:548.00px;transform:scaleX(1.0101);">At achments</span>
<span style="font-size:13.2px;color:#000000;left:915.50px;top:548.00px;transform:scaleX(0.9286);">6</span>
<span style="font-size:16.5px;color:#000000;letter-spacing:-0.8791950000000002px;left:427.95px;top:546.00px;">...................................................................................................................................</span>
<span style="font-size:13.2px;color:#000000;left:336.25px;top:574.00px;">Addit onal Features</span>
<span style="font-size:13.2px;color:#000000;left:915.50px;top:574.00px;transform:scaleX(0.9286);">8</span>
<span style="font-size:16.5px;color:#000000;letter-spacing:-0.8791950000000002px;left:453.88px;top:572.00px;">............................................................................................................................</span>
<span style="font-size:13.2px;color:#000000;left:350.75px;top:599.00px;transform:scaleX(1.0322);">Open or print mult ple f les</span>
<span style="font-size:13.2px;color:#000000;left:915.50px;top:599.00px;transform:scaleX(0.9286);">8</span>
<span style="font-size:16.5px;color:#000000;letter-spacing:-0.8791950000000002px;left:513.16px;top:597.00px;">............................................................................................................</span>
<span style="font-size:13.2px;color:#000000;left:350.75px;top:625.00px;transform:scaleX(0.9912);">Command Line Opt ons</span>
<span style="font-size:13.2px;color:#000000;left:915.50px;top:625.00px;transform:scaleX(0.9286);">9</span>
<span style="font-size:16.5px;color:#000000;letter-spacing:-0.8791950000000002px;left:490.94px;top:623.00px;">..................................................................................................................</span>
<span style="font-size:13.2px;color:#000000;left:349.73px;top:651.00px;transform:scaleX(1.0184);">List of shortcuts</span>
<span style="font-size:13.2px;color:#000000;left:915.50px;top:651.00px;transform:scaleX(0.9286);">9</span>
<span style="font-size:16.5px;color:#000000;letter-spacing:-0.8791950000000002px;left:446.48px;top:649.00px;">..............................................................................................................................</span>
<span style="font-size:13.2px;color:#000000;left:320.59px;top:677.00px;transform:scaleX(0.9062);">MERGE</span>
<span style="font-size:13.2px;color:#000000;left:907.26px;top:677.00px;transform:scaleX(1.0424);">10</span>
<span style="font-size:16.5px;color:#000000;letter-spacing:-0.8791950000000002px;left:368.68px;top:675.00px;">.................................................................................................................................................</span>
<span style="font-size:13.2px;color:#000000;left:335.23px;top:703.00px;transform:scaleX(1.0214);">Basic funct onality</span>
<span style="font-size:13.2px;color:#000000;left:907.26px;top:703.00px;transform:scaleX(1.0424);">10</span>
<span style="font-size:16.5px;color:#000000;letter-spacing:-0.8791950000000002px;left:446.49px;top:701.00px;">............................................................................................................................</span>
<span style="font-size:13.2px;color:#000000;left:350.75px;top:729.00px;transform:scaleX(0.9801);">Toolbars</span>
<span style="font-size:13.2px;color:#000000;left:907.26px;top:729.00px;transform:scaleX(1.0424);">10</span>
<span style="font-size:16.5px;color:#000000;letter-spacing:-0.8791950000000002px;left:402.03px;top:727.00px;">........................................................................................................................................</span>
<span style="font-size:13.2px;color:#000000;left:350.75px;top:755.00px;transform:scaleX(0.9773);">The merge area</span>
<span style="font-size:13.2px;color:#000000;left:907.17px;top:755.00px;transform:scaleX(1.1251);">11</span>
<span style="font-size:16.5px;color:#000000;letter-spacing:-0.8791950000000002px;left:446.49px;top:753.00px;">............................................................................................................................</span>
<span style="font-size:13.2px;color:#000000;left:349.74px;top:781.00px;transform:scaleX(1.0095);">Page Merge, move, rotate, copy, paste, preview</span>
<span style="font-size:13.2px;color:#000000;left:907.17px;top:781.00px;transform:scaleX(1.1251);">11</span>
<span style="font-size:16.5px;color:#000000;letter-spacing:-0.8791950000000002px;left:635.44px;top:779.00px;">.........................................................................</span>
<span style="font-size:13.2px;color:#000000;left:321.50px;top:807.00px;transform:scaleX(0.8804);">CONTACT</span>
<span style="font-size:13.2px;color:#000000;left:907.26px;top:807.00px;transform:scaleX(1.0424);">12</span>
<span style="font-size:16.5px;color:#000000;letter-spacing:-0.8791950000000002px;left:379.80px;top:805.00px;">..............................................................................................................................................</span>
</div>
</div></body></html>
